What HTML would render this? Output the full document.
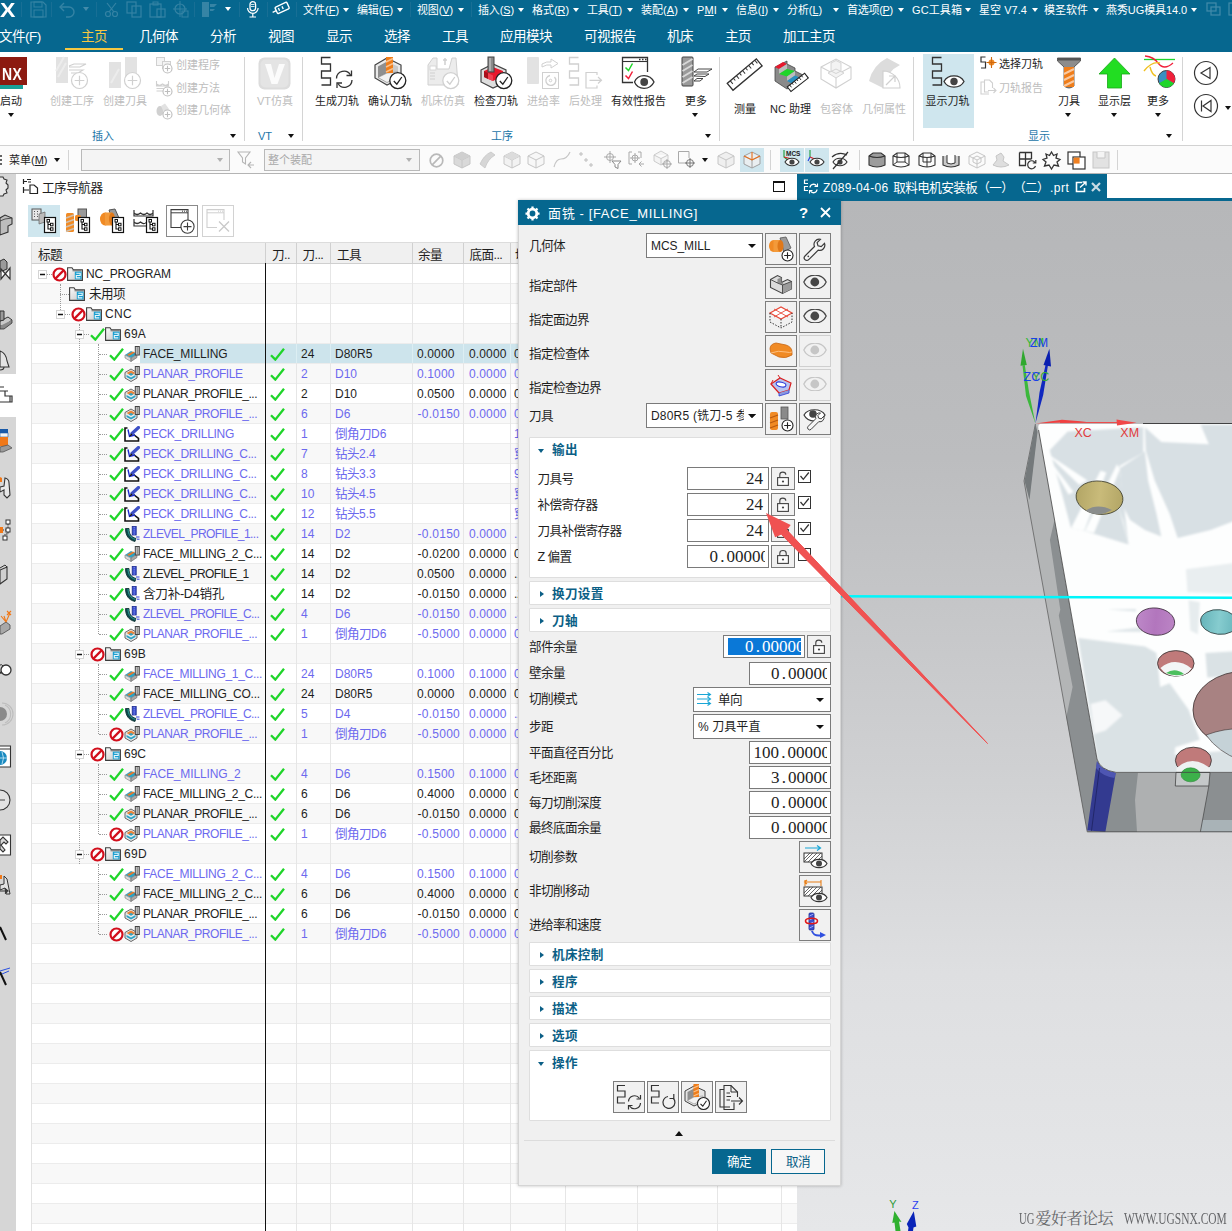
<!DOCTYPE html>
<html lang="zh-CN"><head><meta charset="utf-8"><title>NX - 面铣 [FACE_MILLING]</title>
<style>
*{box-sizing:border-box;margin:0;padding:0}
html,body{width:1232px;height:1231px;overflow:hidden;background:#fff}
body{font-family:"Liberation Sans","Noto Sans CJK SC",sans-serif;font-size:12px;color:#1e1e1e;position:relative}
#root{position:absolute;left:0;top:0;width:1232px;height:1231px;overflow:hidden}
.a{position:absolute;white-space:nowrap;display:block}
.t{position:absolute;white-space:nowrap;line-height:16px;height:16px}
svg{overflow:visible}
.topbar{left:0;top:0;width:1232px;height:52px;background:#06678f}
.qm{color:#fff;font-size:11px}
.tab{color:#fff;font-size:13.5px;letter-spacing:-.5px;line-height:18px;height:18px}
.rib{left:0;top:52px;width:1232px;height:94px;background:#fff;border-bottom:1px solid #d2d2d2}
.rl{font-size:11px;color:#1e1e1e}
.dis{color:#bdbdbd}
.grp{font-size:11px;color:#1b75a8}
.vsep{position:absolute;width:1px;background:#d4d4d4}
.tb{left:0;top:146px;width:1232px;height:28px;background:#fbfbfb;border-bottom:1px solid #b4b4b4}
.caret{position:absolute;width:0;height:0;border-left:3.5px solid transparent;border-right:3.5px solid transparent;border-top:4px solid #111}
.caretw{border-top-color:#fff}
.pu{color:#6c69ee}
.tr{font-size:12px}
.dl{font-size:12.6px;letter-spacing:-.6px;color:#1e1e1e}
.cj{font-size:12.6px;letter-spacing:-.6px}
.sec{font-size:12px;font-weight:bold;color:#0b5f86}
.num{font-family:"Liberation Serif","Noto Serif CJK SC",serif;font-size:17px;color:#222}
</style></head>
<body><div id="root">
<svg width="0" height="0" style="position:absolute"><defs>
<symbol id="ck" viewBox="0 0 15 13"><path d="M1 7.2 L5.3 11.6 L14 0.8" fill="none" stroke="#1fd52a" stroke-width="2.3"/></symbol>
<symbol id="no" viewBox="0 0 15 15"><circle cx="7.5" cy="7.5" r="6" fill="#fff" stroke="#d20f1c" stroke-width="2.2"/><path d="M3.4 11.6 L11.6 3.4" stroke="#d20f1c" stroke-width="2.2"/></symbol>
<symbol id="fd" viewBox="0 0 16 14"><defs><linearGradient id="fdg" x1="0" y1="0" x2="1" y2="1"><stop offset="0" stop-color="#fbfbfb"/><stop offset="1" stop-color="#c4c4c4"/></linearGradient></defs><path d="M0.600 13.400 V0.800 H5 L6.300 2.800 H15.400 V13.400 Z" fill="url(#fdg)" stroke="#3c3c3c" stroke-width="1.100"/><path d="M5.500 3.800 H14.500" stroke="#555" stroke-width=".800"/><rect x="7.800" y="4.600" width="6.800" height="7.800" fill="#1a9fd0"/><path d="M9.300 6.200 H13.200 V8.500 H9.300 V10.900 H13.300" fill="none" stroke="#e8f6fb" stroke-width="1.100"/></symbol>
<symbol id="ex" viewBox="0 0 9 9"><rect x=".500" y=".500" width="8" height="8" fill="#fff" stroke="#d4d4d4"/><path d="M2 4.500 H7" stroke="#111" stroke-width="1.500"/></symbol>
<symbol id="opf" viewBox="0 0 16 16"><path d="M1 9 L7 5 L13 8 L7 12 Z" fill="#2aa4c8"/><path d="M3 8.5 L9 5.5 L11 6.5 L5 10 Z" fill="#e07a30"/><path d="M1 9 V12 L7 15.5 V12 Z" fill="#d8d8d8" stroke="#777" stroke-width=".6"/><path d="M7 12 L13 8 V11.5 L7 15.5 Z" fill="#a9a9a9" stroke="#666" stroke-width=".6"/><rect x="11.3" y="0.5" width="4" height="8.5" fill="#c9c9c9" stroke="#444" stroke-width="1"/><path d="M13.3 1 V8.5" stroke="#777" stroke-width=".8"/></symbol>
<symbol id="opp" viewBox="0 0 16 16"><path d="M1 6.5 L7 3 L13 6.5 V12 L7 15.5 L1 12 Z" fill="#e8e8e8" stroke="#666" stroke-width="1"/><path d="M2.5 7 L7 4.5 L11.5 7 L7 9.5 Z" fill="#e8843a"/><path d="M2.5 9 L7 11.5 L11.5 9 V11 L7 13.5 L2.5 11 Z" fill="#2aa4c8"/><path d="M4.5 8.3 L7 7 L9.5 8.3 L7 9.8 Z" fill="#2aa4c8"/><rect x="11.3" y="0.5" width="4" height="8" fill="#c9c9c9" stroke="#444" stroke-width="1"/><path d="M13.3 1 V8" stroke="#777" stroke-width=".8"/></symbol>
<symbol id="opd" viewBox="0 0 16 16"><path d="M3.5 2 H1 V15 H14.5 V12.5 L9.5 8.5" fill="none" stroke="#111" stroke-width="1.6"/><path d="M4 3.5 L5.5 10.5 L11 9" fill="none" stroke="#1b2bd0" stroke-width="1.4"/><path d="M8 7.5 L14.5 1.5" stroke="#3f51c5" stroke-width="3.2" stroke-linecap="round"/><path d="M5.2 10.8 L8.6 8.9 L7 7.2 Z" fill="#111"/></symbol>
<symbol id="opz" viewBox="0 0 16 16"><path d="M1.5 2.5 H5 C5 8 7 11 12 12.5 L11 15.5 C4.5 14 1.5 9.5 1.5 2.5 Z" fill="#0e4a4d" stroke="#082a2c" stroke-width=".8"/><path d="M4 3 C4.2 8.5 6.5 11.8 11.3 13.4" fill="none" stroke="#2b9a9a" stroke-width="1"/><rect x="8.2" y="0.5" width="4" height="8.5" fill="#3b4fd0" stroke="#1c2a90" stroke-width=".8"/><path d="M10.2 1 V9" stroke="#9aa6f0" stroke-width=".8" stroke-dasharray="1.2 1"/><path d="M12 11 H15.5 M13 13.2 H15.5" stroke="#2438d8" stroke-width="1"/></symbol>
<symbol id="eye" viewBox="0 0 24 14"><path d="M.800 7 C5 -2.200 19 -2.200 23.200 7 C19 16.200 5 16.200 .800 7 Z" fill="none" stroke="currentColor" stroke-width="1.200"/><circle cx="11.800" cy="7" r="4.400" fill="currentColor"/></symbol>
<symbol id="lk" viewBox="0 0 12 15"><rect x=".6" y="6.6" width="10.8" height="7.8" fill="#fdfdfd" stroke="#444" stroke-width="1.1"/><path d="M2.8 6.5 V3.8 C2.8 .2 8.8 .2 8.8 3.8" fill="none" stroke="#444" stroke-width="1.1"/><circle cx="6" cy="10.5" r="1.1" fill="#444"/></symbol>
<symbol id="lkc" viewBox="0 0 12 15"><rect x=".6" y="6.6" width="10.8" height="7.8" fill="#fdfdfd" stroke="#444" stroke-width="1.1"/><path d="M2.8 6.5 V4.2 C2.8 .6 9.2 .6 9.2 4.2 V6.5" fill="none" stroke="#444" stroke-width="1.1"/><circle cx="6" cy="10.5" r="1.1" fill="#444"/></symbol>
</defs></svg>
<div class="a topbar"></div>
<span class="a" style="left:0px;top:-2.500px;font-size:21px;line-height:24px;font-weight:bold;color:#fff;transform:scaleX(1.1);transform-origin:0 0">X</span>
<span class="t qm" style="left:303px;top:1.5px;font-size:11px;">文件(<u>F</u>)</span><i class="caret caretw" style="left:342.5px;top:8px;"></i><span class="t qm" style="left:357px;top:1.5px;font-size:11px;letter-spacing:-0.14px;">编辑(<u>E</u>)</span><i class="caret caretw" style="left:396.5px;top:8px;"></i><span class="t qm" style="left:417px;top:1.5px;font-size:11px;letter-spacing:-0.14px;">视图(<u>V</u>)</span><i class="caret caretw" style="left:457.5px;top:8px;"></i><span class="t qm" style="left:478px;top:1.5px;font-size:11px;letter-spacing:-0.14px;">插入(<u>S</u>)</span><i class="caret caretw" style="left:517.5px;top:8px;"></i><span class="t qm" style="left:532px;top:1.5px;font-size:11px;letter-spacing:-0.06px;">格式(<u>R</u>)</span><i class="caret caretw" style="left:572.5px;top:8px;"></i><span class="t qm" style="left:587px;top:1.5px;font-size:11px;letter-spacing:-0.22px;">工具(<u>T</u>)</span><i class="caret caretw" style="left:626.5px;top:8px;"></i><span class="t qm" style="left:641px;top:1.5px;font-size:11px;letter-spacing:0.06px;">装配(<u>A</u>)</span><i class="caret caretw" style="left:682.5px;top:8px;"></i><span class="t qm" style="left:697px;top:1.5px;font-size:11px;letter-spacing:0.14px;">P<u>M</u>I</span><i class="caret caretw" style="left:721.5px;top:8px;"></i><span class="t qm" style="left:736px;top:1.5px;font-size:11px;letter-spacing:-0.08px;">信息(<u>I</u>)</span><i class="caret caretw" style="left:772.5px;top:8px;"></i><span class="t qm" style="left:787px;top:1.5px;font-size:11px;letter-spacing:-0.09px;">分析(<u>L</u>)</span><i class="caret caretw" style="left:832.5px;top:8px;"></i><span class="t qm" style="left:847px;top:1.5px;font-size:11px;letter-spacing:-0.28px;">首选项(<u>P</u>)</span><i class="caret caretw" style="left:897.5px;top:8px;"></i><span class="t qm" style="left:912px;top:1.5px;font-size:11px;letter-spacing:0.10px;">GC工具箱</span><i class="caret caretw" style="left:964.5px;top:8px;"></i><span class="t qm" style="left:979px;top:1.5px;font-size:11px;letter-spacing:0.04px;">星空 V7.4</span><i class="caret caretw" style="left:1031.5px;top:8px;"></i><span class="t qm" style="left:1044px;top:1.5px;font-size:11px;">模圣软件</span><i class="caret caretw" style="left:1092.5px;top:8px;"></i><span class="t qm" style="left:1106px;top:1.5px;font-size:11px;letter-spacing:-0.09px;">燕秀UG模具14.0</span><i class="caret caretw" style="left:1190.5px;top:8px;"></i>
<i class="vsep" style="left:21px;top:2px;height:15px;background:#186f95"></i><i class="vsep" style="left:51px;top:2px;height:15px;background:#186f95"></i><i class="vsep" style="left:96px;top:2px;height:15px;background:#186f95"></i><i class="vsep" style="left:194px;top:2px;height:15px;background:#186f95"></i><i class="vsep" style="left:239px;top:2px;height:15px;background:#186f95"></i><i class="vsep" style="left:267px;top:2px;height:15px;background:#186f95"></i><i class="vsep" style="left:296px;top:2px;height:15px;background:#186f95"></i><i class="vsep" style="left:410px;top:2px;height:15px;background:#186f95"></i><i class="vsep" style="left:471px;top:2px;height:15px;background:#186f95"></i>
<span class="t tab" style="left:-1px;top:28px;">文件(F)</span><span class="t tab" style="left:81px;top:28px;color:#f5c842;">主页</span><span class="t tab" style="left:139px;top:28px;">几何体</span><span class="t tab" style="left:210px;top:28px;">分析</span><span class="t tab" style="left:268px;top:28px;">视图</span><span class="t tab" style="left:326px;top:28px;">显示</span><span class="t tab" style="left:384px;top:28px;">选择</span><span class="t tab" style="left:442px;top:28px;">工具</span><span class="t tab" style="left:500px;top:28px;">应用模块</span><span class="t tab" style="left:584px;top:28px;">可视报告</span><span class="t tab" style="left:667px;top:28px;">机床</span><span class="t tab" style="left:725px;top:28px;">主页</span><span class="t tab" style="left:783px;top:28px;">加工主页</span><i class="a" style="left:65px;top:48px;width:58px;height:2px;background:#f5c842"></i>
<div class="a rib"></div>
<i class="vsep" style="left:244px;top:57px;height:84px"></i><i class="vsep" style="left:302px;top:57px;height:84px"></i><i class="vsep" style="left:719px;top:57px;height:84px"></i><i class="vsep" style="left:913px;top:57px;height:84px"></i><i class="vsep" style="left:1182px;top:57px;height:84px"></i>
<i class="a" style="left:923px;top:54px;width:51px;height:74px;background:#cfe6ee"></i>
<span class="t rl" style="left:0px;top:93px;">启动</span><span class="t rl dis" style="left:50px;top:93px;">创建工序</span><span class="t rl dis" style="left:103px;top:93px;">创建刀具</span><span class="t rl dis" style="left:176px;top:57px;">创建程序</span><span class="t rl dis" style="left:176px;top:80px;">创建方法</span><span class="t rl dis" style="left:176px;top:102px;">创建几何体</span><span class="t rl dis" style="left:257px;top:93px;">VT仿真</span><span class="t rl" style="left:315px;top:93px;">生成刀轨</span><span class="t rl" style="left:368px;top:93px;">确认刀轨</span><span class="t rl dis" style="left:421px;top:93px;">机床仿真</span><span class="t rl" style="left:474px;top:93px;">检查刀轨</span><span class="t rl dis" style="left:527px;top:93px;">进给率</span><span class="t rl dis" style="left:569px;top:93px;">后处理</span><span class="t rl" style="left:611px;top:93px;">有效性报告</span><span class="t rl" style="left:685px;top:93px;">更多</span><span class="t rl" style="left:734px;top:101px;">测量</span><span class="t rl" style="left:770px;top:101px;">NC 助理</span><span class="t rl dis" style="left:820px;top:101px;">包容体</span><span class="t rl dis" style="left:862px;top:101px;">几何属性</span><span class="t rl" style="left:925.5px;top:93px;">显示刀轨</span><span class="t rl" style="left:999px;top:56px;">选择刀轨</span><span class="t rl dis" style="left:999px;top:80px;">刀轨报告</span><span class="t rl" style="left:1058px;top:93px;">刀具</span><span class="t rl" style="left:1098px;top:93px;">显示层</span><span class="t rl" style="left:1147px;top:93px;">更多</span>
<span class="t grp" style="left:92px;top:128px;">插入</span><span class="t grp" style="left:258px;top:128px;">VT</span><span class="t grp" style="left:491px;top:128px;">工序</span><span class="t grp" style="left:1028px;top:128px;">显示</span><i class="caret" style="left:8px;top:113px;"></i><i class="caret" style="left:230px;top:134px;"></i><i class="caret" style="left:288px;top:134px;"></i><i class="caret" style="left:705px;top:134px;"></i><i class="caret" style="left:692px;top:113px;"></i><i class="caret" style="left:1065px;top:113px;"></i><i class="caret" style="left:1111px;top:113px;"></i><i class="caret" style="left:1155px;top:113px;"></i><i class="caret" style="left:1166px;top:134px;"></i><i class="caret" style="left:1225px;top:106px;"></i>
<div class="a tb"></div>
<span class="t rl" style="left:9px;top:152px;">菜单(<u>M</u>)</span><i class="caret" style="left:54px;top:158px;"></i><i class="vsep" style="left:68px;top:150px;height:20px"></i><i class="a" style="left:81px;top:149px;width:149px;height:22px;background:#f4f4f4;border:1px solid #b9b9b9"></i><i class="caret" style="left:217px;top:158px;border-top-color:#b0b0b0"></i><i class="a" style="left:264px;top:149px;width:156px;height:22px;background:#f4f4f4;border:1px solid #b9b9b9"></i><span class="t rl" style="left:268px;top:152px;color:#a8a8a8">整个装配</span><i class="caret" style="left:406px;top:158px;border-top-color:#b0b0b0"></i>
<i class="a" style="left:0px;top:57px;width:27px;height:28px;background:#8c1a10"></i><i class="a" style="left:0px;top:85px;width:23px;height:4px;background:#1aa098"></i><span class="a" style="left:1.500px;top:64.500px;font-size:17px;line-height:20px;font-weight:bold;color:#fff;transform:scaleX(.82);transform-origin:0 0;letter-spacing:.500px">NX</span><svg class="a" style="left:56px;top:57px" width="33" height="33" viewBox="0 0 33 33"><rect x="0" y="0" width="12" height="26" fill="#e2e2e2"/><path d="M2 20 L10 6 M0 14 L8 0" stroke="#ececec" stroke-width="2"/><path d="M13 9 L18 7 H30 L24 10 H13 M13 13 H27 L22 16 H15" fill="none" stroke="#d0d0d0" stroke-width="1.100"/><circle cx="23.5" cy="23.5" r="8" fill="#fff" stroke="#d0d0d0" stroke-width="1.2"/><path d="M18.7 23.5 H28.3 M23.5 18.7 V28.3" stroke="#d0d0d0" stroke-width="1.2"/></svg><svg class="a" style="left:109px;top:57px" width="33" height="33" viewBox="0 0 33 33"><rect x="16" y="0" width="12" height="21" fill="#e2e2e2"/><rect x="0" y="5" width="12" height="26" fill="#e2e2e2"/><path d="M2 26 L10 12" stroke="#ececec" stroke-width="2"/><circle cx="23.5" cy="23.5" r="8" fill="#fff" stroke="#d0d0d0" stroke-width="1.2"/><path d="M18.7 23.5 H28.3 M23.5 18.7 V28.3" stroke="#d0d0d0" stroke-width="1.2"/></svg><svg class="a" style="left:156px;top:57px" width="17" height="17" viewBox="0 0 17 17"><rect x=".500" y=".500" width="8" height="8" fill="#f4f4f4" stroke="#d0d0d0"/><rect x="6.500" y="4.500" width="8" height="7" fill="#f4f4f4" stroke="#d0d0d0"/><circle cx="11.5" cy="11.5" r="4.5" fill="#fff" stroke="#bdbdbd" stroke-width="1.1"/><path d="M8.8 11.5 H14.2 M11.5 8.8 V14.2" stroke="#bdbdbd" stroke-width="1.1"/></svg><svg class="a" style="left:156px;top:80px" width="17" height="17" viewBox="0 0 17 17"><path d="M.500 1 V6 H12.500 V1 M.500 4 Q3.500 6.500 6.500 4 Q9.500 6.500 12.500 4 M.500 8.500 H12.500 M.500 11 H7" fill="none" stroke="#d0d0d0" stroke-width="1.100"/><circle cx="11.5" cy="11.5" r="4.5" fill="#fff" stroke="#bdbdbd" stroke-width="1.1"/><path d="M8.8 11.5 H14.2 M11.5 8.8 V14.2" stroke="#bdbdbd" stroke-width="1.1"/></svg><svg class="a" style="left:156px;top:103px" width="17" height="17" viewBox="0 0 17 17"><ellipse cx="4" cy="8" rx="3.500" ry="5" fill="#d0d0d0"/><path d="M5 3 L9 .500 L13 6 L9 12 Z" fill="#e2e2e2"/><circle cx="11.5" cy="11.5" r="4.5" fill="#fff" stroke="#bdbdbd" stroke-width="1.1"/><path d="M8.8 11.5 H14.2 M11.5 8.8 V14.2" stroke="#bdbdbd" stroke-width="1.1"/></svg><svg class="a" style="left:258px;top:57px" width="33" height="33" viewBox="0 0 33 33"><rect x=".500" y=".500" width="32" height="32" rx="6" fill="#dcdcdc"/><rect x="2.500" y="2.500" width="28" height="28" rx="5" fill="#e4e4e4"/><path d="M7 7 H13 L16.500 21 L21 7 H27 L19.500 27 H13.500 Z" fill="#fbfbfb"/></svg><svg class="a" style="left:321px;top:57px" width="34" height="34" viewBox="0 0 34 34"><path d="M9.500 .500 H.500 V7 H9.500 V14 H.500 V21 H9.500 V28 H.500" fill="none" stroke="#333" stroke-width="1.300"/><path d="M15.500 21.500 A7.500 7.500 0 0 1 29.500 18 M31 23 A7.500 7.500 0 0 1 17 26.500" fill="none" stroke="#333" stroke-width="1.300"/><path d="M30.500 13.500 V18.500 H25.500 M16 31 V26 H21" fill="none" stroke="#333" stroke-width="1.300"/></svg><svg class="a" style="left:374px;top:57px" width="34" height="34" viewBox="0 0 34 34"><path d="M1 8 L13 1 L27 8 V21 L13 28 L1 21 Z" fill="#e9e9e9" stroke="#444" stroke-width="1.200"/><path d="M4 9.500 L13 4.500 V16 L4 20.500 Z" fill="#8f8f8f"/><path d="M13 4.500 L24 9.500 V15 L13 16 Z" fill="#c9c9c9"/><path d="M4 20.500 L13 16 L24 15 L24 20 L13 25.500 Z" fill="#f2f2f2" stroke="#777" stroke-width=".600"/><rect x="12" y="0" width="7" height="16" fill="#ef7d1a"/><path d="M12 5 L19 1.500 M12 10 L19 6.500 M12 15 L19 11.500" stroke="#f9c08a" stroke-width="1.600"/><circle cx="23.8" cy="23.6" r="8" fill="#fff" stroke="#222" stroke-width="1.3"/><path d="M19.8 24 L22.84 27.2 L27.8 20" fill="none" stroke="#222" stroke-width="1.3"/></svg><svg class="a" style="left:427px;top:57px" width="34" height="34" viewBox="0 0 34 34"><path d="M1 28 V8 L6 1 H10 V12 H22 L25 1 H29 L31 28 Z" fill="#ececec" stroke="#d0d0d0" stroke-width="1"/><rect x="3" y="9" width="6" height="4" fill="#fff" stroke="#d0d0d0" stroke-width=".800"/><path d="M3 16 H8 M3 19 H8 M3 22 H8" stroke="#d0d0d0"/><path d="M18 1 V8 M16 3 H20" stroke="#d0d0d0" stroke-width="1.500"/><circle cx="23.8" cy="23.6" r="8" fill="#fff" stroke="#d0d0d0" stroke-width="1.3"/><path d="M19.8 24 L22.84 27.2 L27.8 20" fill="none" stroke="#d0d0d0" stroke-width="1.3"/></svg><svg class="a" style="left:480px;top:57px" width="34" height="34" viewBox="0 0 34 34"><path d="M1 13 L13 7 L26 13 V25 L13 31 L1 25 Z" fill="#dedede" stroke="#444" stroke-width="1.200"/><path d="M4 14 L13 10 L23 14 L23 19 L13 24 L4 20 Z" fill="#e8182c"/><path d="M4 14 L8 16 V22 L4 20 Z" fill="#a8101c"/><path d="M8 16 L13 18.500 V24 L8 22 Z" fill="#f04050"/><rect x="8" y="0" width="6" height="15" fill="#8a8a8a" stroke="#444" stroke-width="1"/><path d="M10 1 V14" stroke="#bdbdbd" stroke-width="1.500"/><circle cx="23.8" cy="23.6" r="8" fill="#fff" stroke="#222" stroke-width="1.3"/><path d="M19.8 24 L22.84 27.2 L27.8 20" fill="none" stroke="#222" stroke-width="1.3"/></svg><svg class="a" style="left:527px;top:57px" width="34" height="34" viewBox="0 0 34 34"><rect x="0" y="0" width="12" height="27" rx="1" fill="#e2e2e2"/><path d="M15 7 Q20 4 24 5 V2 L31 6.500 L24 11 V8 Q20 7 15 10 Z" fill="#fff" stroke="#d0d0d0" stroke-width="1"/><rect x="15.500" y="15.500" width="16" height="16" fill="#fff" stroke="#d0d0d0" stroke-width="1"/><path d="M27.500 20 A5 5 0 1 1 23 18.500" fill="none" stroke="#d0d0d0" stroke-width="1.300"/><circle cx="23.500" cy="23.500" r="1.300" fill="none" stroke="#d0d0d0"/></svg><svg class="a" style="left:569px;top:57px" width="34" height="34" viewBox="0 0 34 34"><path d="M9.500 .500 H.500 V7 H9.500 V14 H.500 V21 H9.500 V28 H.500" fill="none" stroke="#d0d0d0" stroke-width="1.300"/><path d="M28 18 V15.500 H17 V31 H28 V28.500" fill="none" stroke="#d0d0d0" stroke-width="1.200"/><path d="M20.500 23.300 H32 M29 20 L32.500 23.300 L29 26.500" fill="none" stroke="#d0d0d0" stroke-width="1.200"/></svg><svg class="a" style="left:622px;top:57px" width="34" height="34" viewBox="0 0 34 34"><path d="M11 25.500 H.500 V.500 H25.500 V15" fill="none" stroke="#333" stroke-width="1.300"/><path d="M.500 4.500 H25.500" stroke="#333" stroke-width="1.100"/><path d="M17 2.500 h1.500 M20 2.500 h1.500 M23 2.500 h1.500" stroke="#333" stroke-width="1.300"/><path d="M3.500 10.500 L6.500 13.500 L10.500 6.500" fill="none" stroke="#1fd52a" stroke-width="1.500"/><path d="M3.500 18.500 L6.500 21.500 L10.500 14.500" fill="none" stroke="#f0203a" stroke-width="1.500"/><path d="M12.500 25 C16 16.500 28 16.500 32 25 C28 33.500 16 33.500 12.500 25 Z" fill="#fff" stroke="#333" stroke-width="1.300"/><circle cx="22.200" cy="25" r="3.900" fill="#444"/></svg><svg class="a" style="left:681px;top:57px" width="34" height="34" viewBox="0 0 34 34"><rect x="1" y="0" width="11" height="29" rx="1" fill="#9a9a9a" stroke="#444" stroke-width="1"/><path d="M1.500 8 L11.500 2 M1.500 14 L11.500 8 M1.500 20 L11.500 14 M1.500 26 L11.500 20" stroke="#d8d8d8" stroke-width="2"/><path d="M13 15 L17 12 H31 L26 15 Z M13 19 L16 17 H28 L24 19.500 Z M13 24 L16 21.500 H22 L19 24 Z" fill="#fff" stroke="#333" stroke-width=".900"/></svg><svg class="a" style="left:728px;top:57px" width="36" height="36" viewBox="0 0 36 36"><g transform="rotate(-40 17 18)"><rect x="-2" y="13" width="38" height="9" fill="#fff" stroke="#333" stroke-width="1.300"/><path d="M2 13 v4 M6 13 v3 M10 13 v4 M14 13 v3 M18 13 v4 M22 13 v3 M26 13 v4 M30 13 v3 M34 13 v4" stroke="#333" stroke-width="1"/></g></svg><svg class="a" style="left:773px;top:57px" width="36" height="36" viewBox="0 0 36 36"><path d="M2 10 L2 24 L14 32 L30 22 V18 L22 14 V11 L14 7 V4 Z" fill="#8a8a8a" stroke="#444" stroke-width=".800"/><path d="M2 10 L10 5 L14 7 L6 12 Z" fill="#e8182c"/><path d="M6 12 V17 L14 12 V7 Z" fill="#bdbdbd"/><path d="M6 17 L14 12 L22 14 L14 19.500 Z" fill="#1fd52a"/><path d="M14 19.500 V24 L22 18.500 V14 Z" fill="#bdbdbd"/><path d="M14 24 L22 18.500 L30 22 L22 28 Z" fill="#2a8fc0"/><g transform="rotate(-38 24 26)"><rect x="14" y="23" width="22" height="6" fill="#fff" stroke="#222" stroke-width="1.100"/><path d="M17 23 v3 M20 23 v2 M23 23 v3 M26 23 v2 M29 23 v3 M32 23 v2" stroke="#222" stroke-width=".900"/></g></svg><svg class="a" style="left:820px;top:57px" width="34" height="34" viewBox="0 0 34 34"><path d="M1 10 L16 2 L31 10 V22 L16 31 L1 22 Z M1 10 L16 18 L31 10 M16 18 V31" fill="none" stroke="#d0d0d0" stroke-width="1.100"/><path d="M11 6 L16 3.500 L21 6 V14 L16 16.500 L11 14 Z M8 16 L16 12 L24 16 L16 21 Z" fill="#f3f3f3" stroke="#d0d0d0" stroke-width=".900"/></svg><svg class="a" style="left:867px;top:57px" width="36" height="36" viewBox="0 0 36 36"><path d="M2 24 Q6 8 20 1 L33 8 Q20 14 16 31 Z" fill="#dcdcdc"/><path d="M16 31 H33 A17 17 0 0 0 16 14 Z" fill="#fff" stroke="#d0d0d0" stroke-width="1.100"/><path d="M19 28 L28 19 M22 19 H28 V25" fill="none" stroke="#d0d0d0" stroke-width="1.200"/></svg><svg class="a" style="left:932px;top:57px" width="34" height="34" viewBox="0 0 34 34"><path d="M9.500 .500 H.500 V7 H9.500 V14 H.500 V21 H9.500 V28 H.500" fill="none" stroke="#333" stroke-width="1.300"/><path d="M12 24.500 C16 17 28 17 32 24.500 C28 32 16 32 12 24.500 Z" fill="#fff" stroke="#333" stroke-width="1.300"/><circle cx="22" cy="24.500" r="3.700" fill="#444"/></svg><svg class="a" style="left:980px;top:56px" width="18" height="18" viewBox="0 0 18 18"><path d="M5.500 1 H1 V6 H5.500 V12 H1" fill="none" stroke="#333" stroke-width="1.200"/><circle cx="11.500" cy="6.500" r="3" fill="#f08a24"/><path d="M11.500 1 V12 M6.500 6.500 H16.500" stroke="#d06a10" stroke-width="1.100"/></svg><svg class="a" style="left:980px;top:79px" width="18" height="18" viewBox="0 0 18 18"><path d="M5 3 H1 V15 H9 M9 13 H4.500 V1 H9.500 L12.500 4 V9" fill="none" stroke="#d0d0d0" stroke-width="1.100"/><path d="M8 11.500 H16 M13.500 9 L16 11.500 L13.500 14" fill="none" stroke="#d0d0d0" stroke-width="1.100"/></svg><svg class="a" style="left:1057px;top:57px" width="26" height="34" viewBox="0 0 26 34"><path d="M.500 1 H23.500 V4 L17 10 V29 Q12 33 7 29 V10 L.500 4 Z" fill="#8c8c8c" stroke="#444" stroke-width=".800"/><rect x="7" y="10" width="10" height="20" fill="#ef7d1a"/><path d="M7 17 L17 12 M7 23 L17 18 M7 29 L17 24" stroke="#f9c9a0" stroke-width="2"/><rect x="1" y="1" width="22" height="2.500" fill="#555"/></svg><svg class="a" style="left:1098px;top:57px" width="34" height="34" viewBox="0 0 34 34"><path d="M16.500 1 L32 17 H23.500 V31 H9.500 V17 H1 Z" fill="#22dd22" stroke="#17a817" stroke-width=".800"/></svg><svg class="a" style="left:1142px;top:55px" width="36" height="36" viewBox="0 0 36 36"><path d="M2 4.500 H33" stroke="#1fd52a" stroke-width="1.300"/><path d="M3 1 Q12 2 16 8 Q22 16 31 8" fill="none" stroke="#f0203a" stroke-width="1.300"/><path d="M2 16 Q10 6 18 8 M8 12 Q10 20 14 21" fill="none" stroke="#f0c020" stroke-width="1.400"/><circle cx="24.500" cy="24" r="8.500" fill="#3a8fc0" stroke="#333" stroke-width=".900"/><path d="M24.500 24 V15.500 A8.500 8.500 0 0 1 31.800 28.300 Z" fill="#f0203a"/><path d="M24.500 24 L31.800 28.300 A8.500 8.500 0 0 1 17.200 28.300 Z" fill="#1fd52a"/></svg><svg class="a" style="left:1193px;top:60px" width="28" height="28" viewBox="0 0 28 28"><circle cx="13" cy="13" r="11.500" fill="#fff" stroke="#333" stroke-width="1.200"/><path d="M17 7.500 V18.500 L8 13 Z" fill="none" stroke="#333" stroke-width="1.200"/></svg><svg class="a" style="left:1193px;top:93px" width="28" height="28" viewBox="0 0 28 28"><circle cx="13" cy="13" r="11.500" fill="#fff" stroke="#333" stroke-width="1.200"/><path d="M18 7.500 V18.500 L10 13 Z M8.500 7.500 V18.500" fill="none" stroke="#333" stroke-width="1.200"/></svg>
<svg opacity=".38" class="a" style="left:30px;top:1px" width="17" height="17" viewBox="0 0 17 17"><path d="M1 1 H13 L16 4 V16 H1 Z" fill="none" stroke="#7fb0c6" stroke-width="1.200"/><rect x="4" y="1" width="8" height="5" fill="none" stroke="#7fb0c6"/><rect x="4" y="9" width="9" height="7" fill="none" stroke="#7fb0c6"/></svg><svg opacity=".38" class="a" style="left:58px;top:1px" width="18" height="17" viewBox="0 0 18 17"><path d="M2 6 H11 A5 5 0 0 1 11 16 H8" fill="none" stroke="#7fb0c6" stroke-width="1.400"/><path d="M6 2 L2 6 L6 10" fill="none" stroke="#7fb0c6" stroke-width="1.400"/></svg><i class="caret" style="left:83px;top:7px;border-top-color:#7fb0c6;opacity:.5"></i><svg opacity=".38" class="a" style="left:104px;top:1px" width="16" height="17" viewBox="0 0 16 17"><circle cx="4" cy="13" r="2.500" fill="none" stroke="#7fb0c6" stroke-width="1.200"/><circle cx="11" cy="13" r="2.500" fill="none" stroke="#7fb0c6" stroke-width="1.200"/><path d="M5 11 L12 2 M10 11 L3 2" stroke="#7fb0c6" stroke-width="1.200"/></svg><svg opacity=".38" class="a" style="left:126px;top:1px" width="16" height="17" viewBox="0 0 16 17"><rect x="1" y="1" width="9" height="11" fill="none" stroke="#7fb0c6" stroke-width="1.200"/><rect x="6" y="5" width="9" height="11" fill="none" stroke="#7fb0c6" stroke-width="1.200"/></svg><svg opacity=".38" class="a" style="left:149px;top:1px" width="17" height="17" viewBox="0 0 17 17"><rect x="1" y="3" width="11" height="13" fill="none" stroke="#7fb0c6" stroke-width="1.200"/><rect x="4" y="1" width="5" height="3" fill="none" stroke="#7fb0c6"/><rect x="8" y="8" width="8" height="8" fill="none" stroke="#7fb0c6" stroke-width="1.200"/></svg><svg opacity=".38" class="a" style="left:173px;top:1px" width="17" height="17" viewBox="0 0 17 17"><circle cx="7" cy="8" r="5" fill="none" stroke="#7fb0c6" stroke-width="1.200"/><path d="M7 0 V16 M0 8 H14" stroke="#7fb0c6" stroke-width="1"/><rect x="9" y="10" width="6" height="6" fill="none" stroke="#7fb0c6"/></svg><svg opacity=".4" class="a" style="left:201px;top:1px" width="18" height="17" viewBox="0 0 18 17"><rect x="1" y="1" width="7" height="15" fill="#7fb0c6"/><path d="M9 3 H16 L13 6 H9 Z M9 8 H14 L12 10 H9 Z" fill="#7fb0c6"/></svg><i class="caret caretw" style="left:224.5px;top:7px;"></i><svg class="a" style="left:246px;top:1px" width="14" height="17" viewBox="0 0 14 17"><rect x="4" y=".700" width="5.600" height="9" rx="2.800" fill="none" stroke="#fff" stroke-width="1.300"/><path d="M1.500 7 A5.300 5.300 0 0 0 12.100 7 M6.800 12.500 V15.500 M3.500 16 H10" fill="none" stroke="#fff" stroke-width="1.200"/><path d="M5 3.500 h3.500 M5 5.500 h3.500" stroke="#fff" stroke-width=".800"/></svg><svg class="a" style="left:271px;top:1px" width="20" height="17" viewBox="0 0 20 17"><g transform="rotate(-25 10 8)"><rect x="5" y="4" width="13" height="7" rx="1" fill="none" stroke="#fff" stroke-width="1.400"/><path d="M5 7.500 H1 M8 6 v3 M12 6 v3" stroke="#fff" stroke-width="1.400"/></g></svg><svg opacity=".5" class="a" style="left:1206px;top:2px" width="16" height="15" viewBox="0 0 16 15"><rect x="1" y="1" width="9" height="8" fill="none" stroke="#7fb0c6" stroke-width="1.200"/><rect x="5" y="5" width="9" height="8" fill="none" stroke="#7fb0c6" stroke-width="1.200"/></svg><svg opacity=".5" class="a" style="left:1228px;top:2px" width="12" height="15" viewBox="0 0 12 15"><rect x="1" y="1" width="12" height="12" fill="none" stroke="#7fb0c6" stroke-width="1.200"/></svg>
<svg class="a" style="left:-3px;top:154px" width="6" height="12" viewBox="0 0 6 12"><path d="M0 2 H5 M0 6 H5 M0 10 H5" stroke="#333" stroke-width="1.300"/></svg><svg class="a" style="left:236px;top:150px" width="20" height="20" viewBox="0 0 20 20"><path d="M2 2 H14 L9.500 8 V14 L6.500 12 V8 Z" fill="none" stroke="#b5b5b5" stroke-width="1.100"/><path d="M12 15 H18 M15 12 L12 15 L15 18" fill="none" stroke="#b5b5b5" stroke-width="1.100"/></svg><svg class="a" style="left:429px;top:153px" width="15" height="15" viewBox="0 0 15 15"><circle cx="7.500" cy="7.500" r="6.300" fill="none" stroke="#b9b9b9" stroke-width="1.700"/><path d="M3.200 11.800 L11.800 3.200" stroke="#b9b9b9" stroke-width="1.700"/></svg><svg class="a" style="left:453px;top:151px" width="18" height="18" viewBox="0 0 18 18"><path d="M1 5 L9 1 L17 5 V13 L9 17 L1 13 Z" fill="#d9d9d9" stroke="#c6c6c6" stroke-width="1"/><path d="M1 5 L9 9 L17 5 M9 9 V17" fill="none" stroke="#c6c6c6" stroke-width="1"/><path d="M1 5 L9 1 L17 5 L9 9 Z" fill="#cfcfcf"/></svg><svg class="a" style="left:478px;top:151px" width="18" height="18" viewBox="0 0 18 18"><path d="M2 13 Q6 4 13 1 L17 4 Q10 8 7 17 Z" fill="#d6d6d6" stroke="#c6c6c6" stroke-width=".800"/></svg><svg class="a" style="left:503px;top:151px" width="18" height="18" viewBox="0 0 18 18"><path d="M1 5 L9 1 L17 5 V13 L9 17 L1 13 Z" fill="#f2f2f2" stroke="#c6c6c6" stroke-width="1"/><path d="M1 5 L9 9 L17 5 M9 9 V17" fill="none" stroke="#c6c6c6" stroke-width="1"/><path d="M1 5 L9 1 L17 5 L9 9 Z" fill="#dcdcdc"/></svg><svg class="a" style="left:527px;top:151px" width="18" height="18" viewBox="0 0 18 18"><path d="M1 5 L9 1 L17 5 V13 L9 17 L1 13 Z" fill="#f7f7f7" stroke="#c6c6c6" stroke-width="1"/><path d="M1 5 L9 9 L17 5 M9 9 V17" fill="none" stroke="#c6c6c6" stroke-width="1"/></svg><svg class="a" style="left:553px;top:151px" width="18" height="18" viewBox="0 0 18 18"><path d="M1 16 Q3 8 8 8 Q14 8 17 1" fill="none" stroke="#c6c6c6" stroke-width="1.200"/></svg><svg class="a" style="left:577px;top:151px" width="18" height="18" viewBox="0 0 18 18"><path d="M2 3 h4 M4 1 v4 M7 9 h4 M9 7 v4 M12 14 h4 M14 12 v4" stroke="#bdbdbd" stroke-width="1"/></svg><svg class="a" style="left:603px;top:150px" width="20" height="20" viewBox="0 0 20 20"><circle cx="7" cy="7" r="3.500" fill="none" stroke="#a9a9a9"/><path d="M7 1 V13 M1 7 H13" stroke="#a9a9a9"/><path d="M9 11 H18 L15 14.500 V18.500 L12 17 V14.500 Z" fill="#fff" stroke="#888" stroke-width="1"/></svg><svg class="a" style="left:628px;top:150px" width="20" height="20" viewBox="0 0 20 20"><path d="M4 2 H1 V14 H4 M10 2 H13 V8" fill="none" stroke="#a9a9a9"/><circle cx="7" cy="8" r="3" fill="none" stroke="#a9a9a9"/><path d="M7 3 V13 M2 8 H12" stroke="#a9a9a9"/><path d="M11 14 H16 M13.500 11.500 L11 14 L13.500 16.500" fill="none" stroke="#a9a9a9"/></svg><svg class="a" style="left:653px;top:150px" width="20" height="20" viewBox="0 0 20 20"><path d="M1 5 L8 1 L15 5 V11 L8 15 L1 11 Z M1 5 L8 8.500 L15 5 M8 8.500 V15" fill="#f4f4f4" stroke="#c6c6c6" stroke-width=".900"/><circle cx="14" cy="14" r="3.500" fill="none" stroke="#a9a9a9"/><path d="M14 9 V19 M9 14 H19" stroke="#a9a9a9"/></svg><svg class="a" style="left:677px;top:150px" width="20" height="20" viewBox="0 0 20 20"><path d="M10 13 H1.500 V1.500 H12 V8" fill="none" stroke="#a9a9a9" stroke-width="1"/><circle cx="13" cy="13" r="3.500" fill="none" stroke="#777"/><path d="M13 8 V18 M8 13 H18" stroke="#777"/></svg><i class="caret" style="left:702px;top:158px;"></i><svg class="a" style="left:717px;top:151px" width="18" height="18" viewBox="0 0 18 18"><path d="M1 5 L9 1 L17 5 V13 L9 17 L1 13 Z" fill="#efefef" stroke="#c6c6c6" stroke-width="1"/><path d="M1 5 L9 9 L17 5 M9 9 V17" fill="none" stroke="#c6c6c6" stroke-width="1"/></svg><i class="a" style="left:740px;top:148px;width:24px;height:24px;background:#cfe6ee"></i><svg class="a" style="left:743px;top:151px" width="18" height="18" viewBox="0 0 18 18"><path d="M1 5 L9 1 L17 5 V13 L9 17 L1 13 Z" fill="#e9eef0" stroke="#a0a0a0" stroke-width="1"/><path d="M1 5 L9 9 L17 5 M9 9 V17" fill="none" stroke="#a0a0a0" stroke-width="1"/><path d="M9 1 V9 M1 5 L9 9 L17 5" fill="none" stroke="#e8701a" stroke-width="1.100"/></svg><i class="vsep" style="left:770px;top:150px;height:20px"></i><i class="a" style="left:780px;top:148px;width:24px;height:24px;background:#cfe6ee"></i><svg class="a" style="left:782px;top:149px" width="22" height="22" viewBox="0 0 22 22"><path d="M2 1 V8 L7 12" fill="none" stroke="#1a9a3a" stroke-width="1.100"/><path d="M2 8 L8 9.500" stroke="#e02020" stroke-width="1.100"/><text x="4" y="6.500" font-size="6.500" font-weight="bold" font-family="Liberation Sans,sans-serif" fill="#222">MCS</text><path d="M3 13 C6 8 14 8 17 13 C14 18 6 18 3 13 Z" fill="#fff" stroke="#333" stroke-width="1.100"/><circle cx="10" cy="13" r="2.600" fill="#444"/></svg><i class="a" style="left:805px;top:148px;width:24px;height:24px;background:#cfe6ee"></i><svg class="a" style="left:807px;top:149px" width="22" height="22" viewBox="0 0 22 22"><path d="M3 1 V8" stroke="#1a9a3a" stroke-width="1.100"/><path d="M3 8 L10 11" stroke="#e02020" stroke-width="1.100"/><path d="M3 8 L1 12" stroke="#2040e0" stroke-width="1.100"/><path d="M3 13 C6 8 14 8 17 13 C14 18 6 18 3 13 Z" fill="#fff" stroke="#333" stroke-width="1.100"/><circle cx="10" cy="13" r="2.600" fill="#444"/></svg><svg class="a" style="left:830px;top:149px" width="22" height="22" viewBox="0 0 22 22"><path d="M3 13 C6 8 14 8 17 13 C14 18 6 18 3 13 Z" fill="none" stroke="#333" stroke-width="1.100"/><circle cx="10" cy="13" r="2.600" fill="#444"/><path d="M3 20 L18 3 M2 8 Q9 2 17 6" fill="none" stroke="#333" stroke-width="1.200"/></svg><i class="vsep" style="left:859px;top:150px;height:20px"></i><svg class="a" style="left:868px;top:151px" width="18" height="18" viewBox="0 0 18 18"><path d="M1 5 L5 2 H13 L17 5 V14 Q9 18 1 14 Z" fill="#9c9c9c" stroke="#333" stroke-width="1.100"/><path d="M1 5 Q9 8 17 5" fill="none" stroke="#333" stroke-width="1.100"/></svg><svg class="a" style="left:892px;top:151px" width="18" height="18" viewBox="0 0 18 18"><path d="M1 5 L5 2 H13 L17 5 V14 Q9 18 1 14 Z" fill="none" stroke="#333" stroke-width="1.100"/><path d="M1 5 Q9 8 17 5" fill="none" stroke="#333" stroke-width="1.100"/><path d="M5 2 V11 M13 2 V11 M5 11 H13 M1 14 L5 11 M17 14 L13 11" stroke="#333" stroke-width="1"/></svg><svg class="a" style="left:918px;top:151px" width="18" height="18" viewBox="0 0 18 18"><path d="M1 5 L5 2 H13 L17 5 V14 Q9 18 1 14 Z" fill="none" stroke="#333" stroke-width="1.100"/><path d="M1 5 Q9 8 17 5" fill="none" stroke="#333" stroke-width="1.100"/><path d="M9 7 V16 M5 2 V11 H13 V2" fill="none" stroke="#333" stroke-width="1"/></svg><svg class="a" style="left:942px;top:151px" width="18" height="18" viewBox="0 0 18 18"><path d="M1 5 V14 Q9 18 17 14 V5" fill="#c9c9c9" stroke="#333" stroke-width="1.100"/><path d="M5 4 V12 Q9 14 13 12 V4" fill="#fff" stroke="#333" stroke-width="1"/></svg><svg class="a" style="left:968px;top:151px" width="18" height="18" viewBox="0 0 18 18"><path d="M1 5 L9 1 L17 5 V13 L9 17 L1 13 Z" fill="none" stroke="#c6c6c6" stroke-width="1"/><path d="M1 5 L9 9 L17 5 M9 9 V17" fill="none" stroke="#c6c6c6" stroke-width="1"/><path d="M5 7 L9 5 L13 7 V11 L9 13 L5 11 Z" fill="none" stroke="#c6c6c6"/></svg><svg class="a" style="left:992px;top:151px" width="18" height="18" viewBox="0 0 18 18"><path d="M1 14 L5 9 L4 5 L9 2 L12 6 L11 10 L17 14 Q9 18 1 14 Z" fill="#dedede" stroke="#c6c6c6"/></svg><svg class="a" style="left:1018px;top:151px" width="19" height="19" viewBox="0 0 19 19"><path d="M1.500 1.500 H13.500 V8 M1.500 1.500 V14.500 H8 M7.500 1.500 V14.500 M1.500 8 H13.500" fill="none" stroke="#333" stroke-width="1.300"/><path d="M17 11.500 A4 4 0 1 0 17.500 15 M17.800 9 V12 H14.800" fill="none" stroke="#333" stroke-width="1.200"/></svg><svg class="a" style="left:1042px;top:151px" width="19" height="19" viewBox="0 0 19 19"><path d="M9.500 1 L11.500 4.500 L15 3 L14 7 L18 8.500 L15 11 L16.500 15 L12 14 L9.500 18 L7 14 L2.500 15 L4 11 L1 8.500 L5 7 L4 3 L7.500 4.500 Z" fill="none" stroke="#333" stroke-width="1.300"/></svg><svg class="a" style="left:1067px;top:151px" width="20" height="20" viewBox="0 0 20 20"><rect x="1" y="1" width="12" height="12" fill="#fff" stroke="#333" stroke-width="1.200"/><rect x="6" y="6" width="12" height="12" fill="#fff" stroke="#333" stroke-width="1.200"/><rect x="6.600" y="6.600" width="6" height="6" fill="#f08020"/></svg><svg class="a" style="left:1092px;top:151px" width="18" height="18" viewBox="0 0 18 18"><rect x="1" y="1" width="16" height="16" fill="#e2e2e2" stroke="#c6c6c6"/><path d="M5 1 V7 H13 V1" fill="#f4f4f4" stroke="#c6c6c6"/></svg><i class="vsep" style="left:1117px;top:150px;height:20px"></i>
<i class="a" style="left:16px;top:174px;width:781px;height:1057px;background:#fff"></i><i class="a" style="left:0px;top:174px;width:16px;height:1057px;background:#d6d6d6"></i><i class="a" style="left:0px;top:374px;width:16px;height:43px;background:#fff"></i><svg class="a" style="left:0;top:171px" width="15" height="30" viewBox="0 0 15 30"><path d="M0 6 H3 L4 8 L7 9 L6 12 L8 14 L8 17 L6 19 L7 22 L4 23 L3 25 H0" fill="#e8e8e8" stroke="#333" stroke-width="1.100"/></svg><svg class="a" style="left:0;top:210px" width="15" height="30" viewBox="0 0 15 30"><path d="M0 8 L5 5 L12 8 V14 L8 16 V22 L0 25 Z" fill="#bdbdbd" stroke="#333" stroke-width="1.100"/><path d="M0 11 L5 9 L12 8" fill="none" stroke="#333" stroke-width=".800"/></svg><svg class="a" style="left:0;top:255px" width="15" height="30" viewBox="0 0 15 30"><path d="M0 6 L4 4 L7 7 V14 L0 17 Z" fill="#9a9a9a" stroke="#333" stroke-width="1"/><path d="M1 14 L10 24 V13 L1 24 Z" fill="#fff" stroke="#333" stroke-width="1.200"/></svg><svg class="a" style="left:0;top:303px" width="15" height="30" viewBox="0 0 15 30"><path d="M0 18 L8 14 L12 17 L4 23 L0 23 Z" fill="#c9c9c9" stroke="#333" stroke-width="1"/><path d="M0 8 H4 V17 L0 18 Z" fill="#9a9a9a" stroke="#333" stroke-width="1"/><path d="M0 23 V26 H4 L12 20 V17" fill="#8a8a8a" stroke="#333" stroke-width=".800"/></svg><svg class="a" style="left:0;top:345px" width="15" height="30" viewBox="0 0 15 30"><path d="M0 6 Q6 8 7 16 L9 22 H0 Z" fill="#e4e4e4" stroke="#333" stroke-width="1.100"/><path d="M0 25 Q4 25 4 22" fill="none" stroke="#333" stroke-width="1.100"/></svg><svg class="a" style="left:0;top:381px" width="15" height="30" viewBox="0 0 15 30"><path d="M0 6 H4 M0 10 H5 V15 H10 V21 H0 M5 10 H8 M10 15 H12 V21 H10" fill="none" stroke="#333" stroke-width="1.200"/></svg><svg class="a" style="left:0;top:425px" width="15" height="30" viewBox="0 0 15 30"><rect x="0" y="4" width="8" height="4" fill="#1a5aa8"/><rect x="0" y="8" width="8" height="4" fill="#f4f4f4" stroke="#1a5aa8" stroke-width=".600"/><path d="M0 12 H8 V20 Q4 23 0 21 Z" fill="#f07818"/><path d="M0 22 L8 20 L12 23 L3 27 H0 Z" fill="#9a9a9a" stroke="#555" stroke-width=".800"/></svg><svg class="a" style="left:0;top:473px" width="15" height="30" viewBox="0 0 15 30"><path d="M0 4 V9 L2 9 V5 Z" fill="#f07818"/><path d="M5 5 Q9 6 9 10 L10 22 L7 25 L4 22 V17 L0 19 V14 L4 13 Z" fill="#e8e8e8" stroke="#333" stroke-width="1.100"/></svg><svg class="a" style="left:0;top:517px" width="15" height="30" viewBox="0 0 15 30"><rect x="6" y="3" width="4" height="4" fill="#fff" stroke="#333"/><rect x="6" y="11" width="4" height="4" fill="#fff" stroke="#333"/><rect x="3" y="19" width="4" height="4" fill="#fff" stroke="#333"/><path d="M8 7 V11 M8 15 V17 H5 V19 M0 13 H6" fill="none" stroke="#333" stroke-dasharray="1.500 1"/><path d="M0 10 H3 V16 H0 Z" fill="#f07818"/></svg><svg class="a" style="left:0;top:562px" width="15" height="30" viewBox="0 0 15 30"><path d="M0 8 L7 5 L7 17 L0 22 Z" fill="#d0d0d0" stroke="#333" stroke-width="1.100"/><path d="M0 6 L5 3 L7 5" fill="none" stroke="#333" stroke-width="1"/></svg><svg class="a" style="left:0;top:610px" width="15" height="30" viewBox="0 0 15 30"><path d="M0 16 L6 12 L10 15 V19 L2 24 H0 Z" fill="#a8a8a8" stroke="#555" stroke-width=".900"/><path d="M1 6 L6 12 L4 6 M6 12 L10 3 M7 1 L11 5 M11 1 L7 5" fill="none" stroke="#f07818" stroke-width="1.100"/></svg><svg class="a" style="left:0;top:656px" width="15" height="30" viewBox="0 0 15 30"><circle cx="6" cy="14" r="5" fill="#fff" stroke="#333" stroke-width="1.300"/><path d="M0 17 L2 16" stroke="#333" stroke-width="2"/><path d="M0 9 Q2 8 3 10" fill="none" stroke="#333"/></svg><svg class="a" style="left:0;top:699px" width="15" height="30" viewBox="0 0 15 30"><path d="M0 8 A7 7 0 0 1 0 22 Z" fill="#8a8a8a"/><path d="M2 4 A11 11 0 0 1 2 26 M5 6 A10 10 0 0 1 5 24" fill="none" stroke="#bdbdbd" stroke-width="1.100"/></svg><svg class="a" style="left:0;top:741px" width="15" height="30" viewBox="0 0 15 30"><path d="M0 5 H10.500 V26 H0" fill="#fff" stroke="#333" stroke-width="1.100"/><path d="M0 8 H10.500" stroke="#333"/><path d="M0 10 A7 7 0 0 1 0 24 Z" fill="#1a8ac0"/><path d="M0 17 H7 M2 11 Q5 17 2 23" fill="none" stroke="#bfe4f4" stroke-width=".900"/></svg><svg class="a" style="left:0;top:785px" width="15" height="30" viewBox="0 0 15 30"><path d="M0 5 A10 10 0 0 1 0 25" fill="#e2e2e2" stroke="#333" stroke-width="1.100"/><path d="M0 15 H5" stroke="#333" stroke-width=".900"/></svg><svg class="a" style="left:0;top:830px" width="15" height="30" viewBox="0 0 15 30"><path d="M0 5 H10.500 V25 H0" fill="#fff" stroke="#333" stroke-width="1.100"/><path d="M0 10 L3 7 L8 12 L6 14 L4 12 L1 15 L5 20 L3 22 L0 19 Z" fill="#d8d8d8" stroke="#333" stroke-width="1.100"/></svg><svg class="a" style="left:0;top:872px" width="15" height="30" viewBox="0 0 15 30"><path d="M0 3 H2 V7 H0 Z" fill="#f07818"/><path d="M4 4 Q8 6 8 12 L10 22 H6 L5 16 L0 18 V13 L4 12 Z" fill="#e2e2e2" stroke="#333" stroke-width="1"/><path d="M0 19 H7 M5 16.500 L8 19 L5 21.500" fill="none" stroke="#333" stroke-width="1.200"/></svg><svg class="a" style="left:0;top:919px" width="15" height="30" viewBox="0 0 15 30"><path d="M0 8 L6 21" stroke="#111" stroke-width="2"/></svg><svg class="a" style="left:0;top:962px" width="15" height="30" viewBox="0 0 15 30"><path d="M0 10 L6 23" stroke="#111" stroke-width="2"/><path d="M0 9 L10 6 M2 12 L9 9" stroke="#2a50e0" stroke-width="1"/></svg>
<svg class="a" style="left:22px;top:178px" width="16" height="16" viewBox="0 0 16 16"><path d="M1.5 1 V6 M1.5 3.5 H5 M1.5 9 V15 M1.5 12 H7 M8 15.5 H15.5 V10 L12 7 H8 Z" fill="none" stroke="#222" stroke-width="1.2"/><path d="M5 1.5 H9 M6 4 H9" stroke="#222" stroke-width="1.2"/></svg><span class="t tr" style="left:42px;top:179.5px;font-size:12.6px;letter-spacing:-0.49px;">工序导航器</span><i class="a" style="left:773px;top:181px;width:12px;height:11px;border:1.300px solid #111;border-top-width:2.500px"></i>
<i class="a" style="left:28px;top:205px;width:32px;height:32px;background:#cfe6ee"></i><svg class="a" style="left:31px;top:208px" width="26" height="26" viewBox="0 0 26 26"><rect x="1" y="1" width="9" height="11" fill="#e8e8e8" stroke="#555"/><path d="M3 3.5h1M6 3.5h1M3 6h1M6 6h1M3 8.500h1M6 8.500h1" stroke="#555"/><path d="M8 6 L14 4 V14 L8 16 Z" fill="#bbb" stroke="#666" stroke-width=".7"/><rect x="13.500" y="9.500" width="11" height="15" fill="#fff" stroke="#111" stroke-width="1.2"/><path d="M17 12.500 V21 H20 M17 16.500 H20" fill="none" stroke="#111" stroke-width="1.1"/><rect x="16" y="11.500" width="2.500" height="2.500" fill="#fff" stroke="#111"/><rect x="19.500" y="15.300" width="2.500" height="2.500" fill="#fff" stroke="#111"/><rect x="19.500" y="19.800" width="2.500" height="2.500" fill="#fff" stroke="#111"/></svg><svg class="a" style="left:65px;top:208px" width="26" height="26" viewBox="0 0 26 26"><rect x="13" y="1" width="8.500" height="10" fill="#9a9a9a" stroke="#555"/><rect x="10" y="7" width="6" height="6" rx="1.500" fill="#f08a24"/><rect x="1" y="5" width="8" height="19" rx="1.500" fill="#f08a24"/><path d="M1 10 L9 7 M1 14.500 L9 11.500 M1 19 L9 16 M1 23.500 L9 20.500" stroke="#d0c0b0" stroke-width="1.500"/><rect x="13.500" y="9.500" width="11" height="15" fill="#fff" stroke="#111" stroke-width="1.2"/><path d="M17 12.500 V21 H20 M17 16.500 H20" fill="none" stroke="#111" stroke-width="1.1"/><rect x="16" y="11.500" width="2.500" height="2.500" fill="#fff" stroke="#111"/><rect x="19.500" y="15.300" width="2.500" height="2.500" fill="#fff" stroke="#111"/><rect x="19.500" y="19.800" width="2.500" height="2.500" fill="#fff" stroke="#111"/></svg><svg class="a" style="left:99px;top:208px" width="26" height="26" viewBox="0 0 26 26"><path d="M10 2 L16 1 L20 10 L14 14 Z" fill="#9a9a9a" stroke="#555"/><ellipse cx="6" cy="11" rx="5" ry="6.500" fill="#f08a24"/><rect x="6" y="4.500" width="7" height="13" fill="#f39a3a"/><ellipse cx="13" cy="11" rx="3" ry="6.500" fill="#e07818"/><rect x="13.500" y="9.500" width="11" height="15" fill="#fff" stroke="#111" stroke-width="1.2"/><path d="M17 12.500 V21 H20 M17 16.500 H20" fill="none" stroke="#111" stroke-width="1.1"/><rect x="16" y="11.500" width="2.500" height="2.500" fill="#fff" stroke="#111"/><rect x="19.500" y="15.300" width="2.500" height="2.500" fill="#fff" stroke="#111"/><rect x="19.500" y="19.800" width="2.500" height="2.500" fill="#fff" stroke="#111"/></svg><svg class="a" style="left:133px;top:208px" width="26" height="26" viewBox="0 0 26 26"><path d="M1 2 V8 H20 V2 M1 5 Q4 8 7.500 5 Q11 8 14 5 Q17 8 20 5" fill="none" stroke="#333" stroke-width="1.2"/><path d="M1 11 V18 H13 M1 14 Q4 17 7.500 14 Q11 17 13 14.500" fill="none" stroke="#333" stroke-width="1.2"/><rect x="13.500" y="9.500" width="11" height="15" fill="#fff" stroke="#111" stroke-width="1.2"/><path d="M17 12.500 V21 H20 M17 16.500 H20" fill="none" stroke="#111" stroke-width="1.1"/><rect x="16" y="11.500" width="2.500" height="2.500" fill="#fff" stroke="#111"/><rect x="19.500" y="15.300" width="2.500" height="2.500" fill="#fff" stroke="#111"/><rect x="19.500" y="19.800" width="2.500" height="2.500" fill="#fff" stroke="#111"/></svg><i class="a" style="left:166px;top:205px;width:32px;height:32px;border:1px solid #8a8a8a;background:#fff"></i><svg class="a" style="left:169px;top:208px" width="26" height="26" viewBox="0 0 26 26"><path d="M12 19.500 H2 V1.600 H19 V12" fill="none" stroke="#3c3c3c" stroke-width="1.100"/><path d="M2 4.800 H19" stroke="#3c3c3c" stroke-width="1"/><path d="M13 3.200 h1 M15 3.200 h1 M17 3.200 h1" stroke="#3c3c3c" stroke-width="1"/><circle cx="18.500" cy="18.600" r="6.600" fill="#fff" stroke="#3c3c3c" stroke-width="1.100"/><path d="M14.500 18.600 H22.500 M18.500 14.600 V22.600" stroke="#3c3c3c" stroke-width="1.100"/></svg><i class="a" style="left:202px;top:205px;width:32px;height:32px;border:1px solid #d2d2d2;background:#fff"></i><svg class="a" style="left:205px;top:208px" width="26" height="26" viewBox="0 0 26 26"><path d="M12 19.500 H2 V1.600 H19 V12" fill="none" stroke="#cfcfcf" stroke-width="1.100"/><path d="M2 4.800 H19" stroke="#cfcfcf" stroke-width="1"/><path d="M13 3.200 h1 M15 3.200 h1 M17 3.200 h1" stroke="#cfcfcf" stroke-width="1"/><path d="M14 13.500 L24 23.500 M24 13.500 L14 23.500" stroke="#c9c9c9" stroke-width="1.300"/></svg>
<i class="a" style="left:31px;top:242px;width:766px;height:22px;background:#f0f0f0;border-top:1px solid #dcdcdc;border-bottom:1px solid #cfcfcf;border-left:1px solid #dcdcdc"></i><i class="vsep" style="left:265px;top:243px;height:20px;background:#d0d0d0"></i><i class="vsep" style="left:296px;top:243px;height:20px;background:#d0d0d0"></i><i class="vsep" style="left:330px;top:243px;height:20px;background:#d0d0d0"></i><i class="vsep" style="left:412px;top:243px;height:20px;background:#d0d0d0"></i><i class="vsep" style="left:463px;top:243px;height:20px;background:#d0d0d0"></i><i class="vsep" style="left:509.5px;top:243px;height:20px;background:#d0d0d0"></i><i class="vsep" style="left:565px;top:243px;height:20px;background:#d0d0d0"></i><i class="vsep" style="left:637px;top:243px;height:20px;background:#d0d0d0"></i><i class="vsep" style="left:717px;top:243px;height:20px;background:#d0d0d0"></i><i class="vsep" style="left:781px;top:243px;height:20px;background:#d0d0d0"></i><span class="t tr cj" style="left:38px;top:246.5px;">标题</span><span class="t tr cj" style="left:272px;top:246.5px;">刀..</span><span class="t tr cj" style="left:302.5px;top:246.5px;">刀...</span><span class="t tr cj" style="left:337px;top:246.5px;">工具</span><span class="t tr cj" style="left:418px;top:246.5px;">余量</span><span class="t tr cj" style="left:469.5px;top:246.5px;">底面...</span><span class="t tr cj" style="left:515px;top:246.5px;">切</span>
<div class="a" style="left:31px;top:264px;width:766px;height:967px;background:repeating-linear-gradient(#fff 0,#fff 19px,#ececec 19px,#ececec 20px,#f8f8f8 20px,#f8f8f8 39px,#ececec 39px,#ececec 40px);border-left:1px solid #e2e2e2"></div>
<i class="vsep" style="left:296px;top:264px;height:967px;background:#e6e6e6"></i><i class="vsep" style="left:330px;top:264px;height:967px;background:#e6e6e6"></i><i class="vsep" style="left:412px;top:264px;height:967px;background:#e6e6e6"></i><i class="vsep" style="left:463px;top:264px;height:967px;background:#e6e6e6"></i><i class="vsep" style="left:509.5px;top:264px;height:967px;background:#e6e6e6"></i><i class="vsep" style="left:565px;top:264px;height:967px;background:#e6e6e6"></i><i class="vsep" style="left:637px;top:264px;height:967px;background:#e6e6e6"></i><i class="vsep" style="left:717px;top:264px;height:967px;background:#e6e6e6"></i><i class="vsep" style="left:781px;top:264px;height:967px;background:#e6e6e6"></i><i class="a" style="left:140px;top:344px;width:657px;height:19px;background:#cde4ec"></i><i class="vsep" style="left:296px;top:344px;height:19px;background:#dceef3"></i><i class="vsep" style="left:330px;top:344px;height:19px;background:#dceef3"></i><i class="vsep" style="left:412px;top:344px;height:19px;background:#dceef3"></i><i class="vsep" style="left:463px;top:344px;height:19px;background:#dceef3"></i><i class="vsep" style="left:509.5px;top:344px;height:19px;background:#dceef3"></i>
<i class="a" style="left:60px;top:284px;width:0px;height:30px;border-left:1px dotted #9a9a9a"></i><i class="a" style="left:60px;top:294px;width:9px;height:0px;border-top:1px dotted #9a9a9a"></i><i class="a" style="left:79px;top:324px;width:0px;height:540px;border-left:1px dotted #9a9a9a"></i><i class="a" style="left:98px;top:344px;width:0px;height:290px;border-left:1px dotted #9a9a9a"></i><i class="a" style="left:98px;top:664px;width:0px;height:70px;border-left:1px dotted #9a9a9a"></i><i class="a" style="left:98px;top:764px;width:0px;height:70px;border-left:1px dotted #9a9a9a"></i><i class="a" style="left:98px;top:864px;width:0px;height:70px;border-left:1px dotted #9a9a9a"></i><i class="a" style="left:47px;top:274px;width:5px;height:0px;border-top:1px dotted #9a9a9a"></i><i class="a" style="left:65px;top:314px;width:5px;height:0px;border-top:1px dotted #9a9a9a"></i><i class="a" style="left:84px;top:334px;width:5px;height:0px;border-top:1px dotted #9a9a9a"></i><i class="a" style="left:84px;top:654px;width:5px;height:0px;border-top:1px dotted #9a9a9a"></i><i class="a" style="left:84px;top:754px;width:5px;height:0px;border-top:1px dotted #9a9a9a"></i><i class="a" style="left:84px;top:854px;width:5px;height:0px;border-top:1px dotted #9a9a9a"></i>
<svg class="a" style="left:37.5px;top:269.7px;" width="9" height="9"><use href="#ex"/></svg><svg class="a" style="left:52px;top:266.5px;" width="15" height="15"><use href="#no"/></svg><svg class="a" style="left:67px;top:266.5px;" width="16" height="14"><use href="#fd"/></svg><span class="t tr" style="left:86px;top:266px;font-size:12px;letter-spacing:-0.10px;">NC_PROGRAM</span>
<svg class="a" style="left:69px;top:286.5px;" width="16" height="14"><use href="#fd"/></svg><span class="t tr" style="left:89px;top:286px;font-size:12.6px;letter-spacing:-0.59px;">未用项</span>
<svg class="a" style="left:55.5px;top:309.7px;" width="9" height="9"><use href="#ex"/></svg><svg class="a" style="left:71px;top:306.5px;" width="15" height="15"><use href="#no"/></svg><svg class="a" style="left:86px;top:306.5px;" width="16" height="14"><use href="#fd"/></svg><span class="t tr" style="left:105px;top:306px;font-size:12px;letter-spacing:0.33px;">CNC</span>
<svg class="a" style="left:74.5px;top:329.7px;" width="9" height="9"><use href="#ex"/></svg><svg class="a" style="left:89.5px;top:327.5px;" width="15" height="13"><use href="#ck"/></svg><svg class="a" style="left:105px;top:326.5px;" width="16" height="14"><use href="#fd"/></svg><span class="t tr" style="left:124px;top:326px;font-size:12px;letter-spacing:0.21px;">69A</span>
<i class="a" style="left:99px;top:354px;width:8px;height:0px;border-top:1px dotted #9a9a9a"></i><svg class="a" style="left:108.5px;top:347.5px;" width="15" height="13"><use href="#ck"/></svg><svg class="a" style="left:124px;top:346px;" width="16" height="16"><use href="#opf"/></svg><span class="t tr" style="left:143px;top:346px;font-size:12px;letter-spacing:-0.13px;">FACE_MILLING</span><svg class="a" style="left:270px;top:348px;" width="15" height="13"><use href="#ck"/></svg><span class="t tr" style="left:301px;top:346px;">24</span><span class="t tr" style="left:335px;top:346px;">D80R5</span><span class="t tr" style="left:417px;top:346px;font-size:12px;letter-spacing:0.13px;">0.0000</span><span class="t tr" style="left:469px;top:346px;font-size:12px;letter-spacing:0.13px;">0.0000</span><span class="t tr" style="left:514px;top:346px;width:5px;overflow:hidden">0</span>
<i class="a" style="left:99px;top:374px;width:8px;height:0px;border-top:1px dotted #9a9a9a"></i><svg class="a" style="left:108.5px;top:367.5px;" width="15" height="13"><use href="#ck"/></svg><svg class="a" style="left:124px;top:366px;" width="16" height="16"><use href="#opp"/></svg><span class="t tr pu" style="left:143px;top:366px;font-size:12px;letter-spacing:-0.47px;">PLANAR_PROFILE</span><svg class="a" style="left:270px;top:368px;" width="15" height="13"><use href="#ck"/></svg><span class="t tr pu" style="left:301px;top:366px;">2</span><span class="t tr pu" style="left:335px;top:366px;">D10</span><span class="t tr pu" style="left:417px;top:366px;font-size:12px;letter-spacing:0.13px;">0.1000</span><span class="t tr pu" style="left:469px;top:366px;font-size:12px;letter-spacing:0.13px;">0.0000</span><span class="t tr pu" style="left:514px;top:366px;width:5px;overflow:hidden">0</span>
<i class="a" style="left:99px;top:394px;width:8px;height:0px;border-top:1px dotted #9a9a9a"></i><svg class="a" style="left:108.5px;top:387.5px;" width="15" height="13"><use href="#ck"/></svg><svg class="a" style="left:124px;top:386px;" width="16" height="16"><use href="#opp"/></svg><span class="t tr" style="left:143px;top:386px;font-size:12px;letter-spacing:-0.48px;">PLANAR_PROFILE_...</span><svg class="a" style="left:270px;top:388px;" width="15" height="13"><use href="#ck"/></svg><span class="t tr" style="left:301px;top:386px;">2</span><span class="t tr" style="left:335px;top:386px;">D10</span><span class="t tr" style="left:417px;top:386px;font-size:12px;letter-spacing:0.13px;">0.0500</span><span class="t tr" style="left:469px;top:386px;font-size:12px;letter-spacing:0.13px;">0.0000</span><span class="t tr" style="left:514px;top:386px;width:5px;overflow:hidden">0</span>
<i class="a" style="left:99px;top:414px;width:8px;height:0px;border-top:1px dotted #9a9a9a"></i><svg class="a" style="left:108.5px;top:407.5px;" width="15" height="13"><use href="#ck"/></svg><svg class="a" style="left:124px;top:406px;" width="16" height="16"><use href="#opp"/></svg><span class="t tr pu" style="left:143px;top:406px;font-size:12px;letter-spacing:-0.48px;">PLANAR_PROFILE_...</span><svg class="a" style="left:270px;top:408px;" width="15" height="13"><use href="#ck"/></svg><span class="t tr pu" style="left:301px;top:406px;">6</span><span class="t tr pu" style="left:335px;top:406px;">D6</span><span class="t tr pu" style="left:417.5px;top:406px;font-size:12px;letter-spacing:0.26px;">-0.0150</span><span class="t tr pu" style="left:469px;top:406px;font-size:12px;letter-spacing:0.13px;">0.0000</span><span class="t tr pu" style="left:514px;top:406px;width:5px;overflow:hidden">0</span>
<i class="a" style="left:99px;top:434px;width:8px;height:0px;border-top:1px dotted #9a9a9a"></i><svg class="a" style="left:108.5px;top:427.5px;" width="15" height="13"><use href="#ck"/></svg><svg class="a" style="left:124px;top:426px;" width="16" height="16"><use href="#opd"/></svg><span class="t tr pu" style="left:143px;top:426px;font-size:12px;letter-spacing:-0.28px;">PECK_DRILLING</span><svg class="a" style="left:270px;top:428px;" width="15" height="13"><use href="#ck"/></svg><span class="t tr pu" style="left:301px;top:426px;">1</span><span class="t tr pu" style="left:335px;top:426px;"><span class="cj">倒角刀</span>D6</span><span class="t tr pu" style="left:514px;top:426px;width:5px;overflow:hidden">1</span>
<i class="a" style="left:99px;top:454px;width:8px;height:0px;border-top:1px dotted #9a9a9a"></i><svg class="a" style="left:108.5px;top:447.5px;" width="15" height="13"><use href="#ck"/></svg><svg class="a" style="left:124px;top:446px;" width="16" height="16"><use href="#opd"/></svg><span class="t tr pu" style="left:143px;top:446px;font-size:12px;letter-spacing:-0.36px;">PECK_DRILLING_C...</span><svg class="a" style="left:270px;top:448px;" width="15" height="13"><use href="#ck"/></svg><span class="t tr pu" style="left:301px;top:446px;">7</span><span class="t tr pu" style="left:335px;top:446px;"><span class="cj">钻头</span>2.4</span><span class="t tr pu cj" style="left:514px;top:446px;width:5px;overflow:hidden">穿</span>
<i class="a" style="left:99px;top:474px;width:8px;height:0px;border-top:1px dotted #9a9a9a"></i><svg class="a" style="left:108.5px;top:467.5px;" width="15" height="13"><use href="#ck"/></svg><svg class="a" style="left:124px;top:466px;" width="16" height="16"><use href="#opd"/></svg><span class="t tr pu" style="left:143px;top:466px;font-size:12px;letter-spacing:-0.36px;">PECK_DRILLING_C...</span><svg class="a" style="left:270px;top:468px;" width="15" height="13"><use href="#ck"/></svg><span class="t tr pu" style="left:301px;top:466px;">8</span><span class="t tr pu" style="left:335px;top:466px;"><span class="cj">钻头</span>3.3</span><span class="t tr pu" style="left:514px;top:466px;width:5px;overflow:hidden">9</span>
<i class="a" style="left:99px;top:494px;width:8px;height:0px;border-top:1px dotted #9a9a9a"></i><svg class="a" style="left:108.5px;top:487.5px;" width="15" height="13"><use href="#ck"/></svg><svg class="a" style="left:124px;top:486px;" width="16" height="16"><use href="#opd"/></svg><span class="t tr pu" style="left:143px;top:486px;font-size:12px;letter-spacing:-0.36px;">PECK_DRILLING_C...</span><svg class="a" style="left:270px;top:488px;" width="15" height="13"><use href="#ck"/></svg><span class="t tr pu" style="left:301px;top:486px;">10</span><span class="t tr pu" style="left:335px;top:486px;"><span class="cj">钻头</span>4.5</span><span class="t tr pu cj" style="left:514px;top:486px;width:5px;overflow:hidden">穿</span>
<i class="a" style="left:99px;top:514px;width:8px;height:0px;border-top:1px dotted #9a9a9a"></i><svg class="a" style="left:108.5px;top:507.5px;" width="15" height="13"><use href="#ck"/></svg><svg class="a" style="left:124px;top:506px;" width="16" height="16"><use href="#opd"/></svg><span class="t tr pu" style="left:143px;top:506px;font-size:12px;letter-spacing:-0.36px;">PECK_DRILLING_C...</span><svg class="a" style="left:270px;top:508px;" width="15" height="13"><use href="#ck"/></svg><span class="t tr pu" style="left:301px;top:506px;">12</span><span class="t tr pu" style="left:335px;top:506px;"><span class="cj">钻头</span>5.5</span><span class="t tr pu cj" style="left:514px;top:506px;width:5px;overflow:hidden">穿</span>
<i class="a" style="left:99px;top:534px;width:8px;height:0px;border-top:1px dotted #9a9a9a"></i><svg class="a" style="left:108.5px;top:527.5px;" width="15" height="13"><use href="#ck"/></svg><svg class="a" style="left:124px;top:526px;" width="16" height="16"><use href="#opz"/></svg><span class="t tr pu" style="left:143px;top:526px;font-size:12px;letter-spacing:-0.56px;">ZLEVEL_PROFILE_1...</span><svg class="a" style="left:270px;top:528px;" width="15" height="13"><use href="#ck"/></svg><span class="t tr pu" style="left:301px;top:526px;">14</span><span class="t tr pu" style="left:335px;top:526px;">D2</span><span class="t tr pu" style="left:417.5px;top:526px;font-size:12px;letter-spacing:0.26px;">-0.0150</span><span class="t tr pu" style="left:469px;top:526px;font-size:12px;letter-spacing:0.13px;">0.0000</span><span class="t tr pu" style="left:514px;top:526px;width:5px;overflow:hidden">.1</span>
<i class="a" style="left:99px;top:554px;width:8px;height:0px;border-top:1px dotted #9a9a9a"></i><svg class="a" style="left:108.5px;top:547.5px;" width="15" height="13"><use href="#ck"/></svg><svg class="a" style="left:124px;top:546px;" width="16" height="16"><use href="#opf"/></svg><span class="t tr" style="left:143px;top:546px;font-size:12px;letter-spacing:-0.30px;">FACE_MILLING_2_C...</span><svg class="a" style="left:270px;top:548px;" width="15" height="13"><use href="#ck"/></svg><span class="t tr" style="left:301px;top:546px;">14</span><span class="t tr" style="left:335px;top:546px;">D2</span><span class="t tr" style="left:417.5px;top:546px;font-size:12px;letter-spacing:0.26px;">-0.0200</span><span class="t tr" style="left:469px;top:546px;font-size:12px;letter-spacing:0.13px;">0.0000</span><span class="t tr" style="left:514px;top:546px;width:5px;overflow:hidden">0</span>
<i class="a" style="left:99px;top:574px;width:8px;height:0px;border-top:1px dotted #9a9a9a"></i><svg class="a" style="left:108.5px;top:567.5px;" width="15" height="13"><use href="#ck"/></svg><svg class="a" style="left:124px;top:566px;" width="16" height="16"><use href="#opz"/></svg><span class="t tr" style="left:143px;top:566px;font-size:12px;letter-spacing:-0.66px;">ZLEVEL_PROFILE_1</span><svg class="a" style="left:270px;top:568px;" width="15" height="13"><use href="#ck"/></svg><span class="t tr" style="left:301px;top:566px;">14</span><span class="t tr" style="left:335px;top:566px;">D2</span><span class="t tr" style="left:417px;top:566px;font-size:12px;letter-spacing:0.13px;">0.0500</span><span class="t tr" style="left:469px;top:566px;font-size:12px;letter-spacing:0.13px;">0.0000</span><span class="t tr" style="left:514px;top:566px;width:5px;overflow:hidden">.1</span>
<i class="a" style="left:99px;top:594px;width:8px;height:0px;border-top:1px dotted #9a9a9a"></i><svg class="a" style="left:108.5px;top:587.5px;" width="15" height="13"><use href="#ck"/></svg><svg class="a" style="left:124px;top:586px;" width="16" height="16"><use href="#opz"/></svg><span class="t tr" style="left:143px;top:586px;font-size:12.6px;letter-spacing:-0.28px;">含刀补-D4销孔</span><svg class="a" style="left:270px;top:588px;" width="15" height="13"><use href="#ck"/></svg><span class="t tr" style="left:301px;top:586px;">14</span><span class="t tr" style="left:335px;top:586px;">D2</span><span class="t tr" style="left:417.5px;top:586px;font-size:12px;letter-spacing:0.26px;">-0.0150</span><span class="t tr" style="left:469px;top:586px;font-size:12px;letter-spacing:0.13px;">0.0000</span><span class="t tr" style="left:514px;top:586px;width:5px;overflow:hidden">.2</span>
<i class="a" style="left:99px;top:614px;width:8px;height:0px;border-top:1px dotted #9a9a9a"></i><svg class="a" style="left:108.5px;top:607.5px;" width="15" height="13"><use href="#ck"/></svg><svg class="a" style="left:124px;top:606px;" width="16" height="16"><use href="#opz"/></svg><span class="t tr pu" style="left:143px;top:606px;font-size:12px;letter-spacing:-0.63px;">ZLEVEL_PROFILE_C...</span><svg class="a" style="left:270px;top:608px;" width="15" height="13"><use href="#ck"/></svg><span class="t tr pu" style="left:301px;top:606px;">4</span><span class="t tr pu" style="left:335px;top:606px;">D6</span><span class="t tr pu" style="left:417.5px;top:606px;font-size:12px;letter-spacing:0.26px;">-0.0150</span><span class="t tr pu" style="left:469px;top:606px;font-size:12px;letter-spacing:0.13px;">0.0000</span><span class="t tr pu" style="left:514px;top:606px;width:5px;overflow:hidden">.3</span>
<i class="a" style="left:99px;top:634px;width:8px;height:0px;border-top:1px dotted #9a9a9a"></i><svg class="a" style="left:108.5px;top:627.5px;" width="15" height="13"><use href="#ck"/></svg><svg class="a" style="left:124px;top:626px;" width="16" height="16"><use href="#opp"/></svg><span class="t tr pu" style="left:143px;top:626px;font-size:12px;letter-spacing:-0.48px;">PLANAR_PROFILE_...</span><svg class="a" style="left:270px;top:628px;" width="15" height="13"><use href="#ck"/></svg><span class="t tr pu" style="left:301px;top:626px;">1</span><span class="t tr pu" style="left:335px;top:626px;"><span class="cj">倒角刀</span>D6</span><span class="t tr pu" style="left:417.5px;top:626px;font-size:12px;letter-spacing:0.26px;">-0.5000</span><span class="t tr pu" style="left:469px;top:626px;font-size:12px;letter-spacing:0.13px;">0.0000</span><span class="t tr pu" style="left:514px;top:626px;width:5px;overflow:hidden">0</span>
<svg class="a" style="left:74.5px;top:649.7px;" width="9" height="9"><use href="#ex"/></svg><svg class="a" style="left:90px;top:646.5px;" width="15" height="15"><use href="#no"/></svg><svg class="a" style="left:105px;top:646.5px;" width="16" height="14"><use href="#fd"/></svg><span class="t tr" style="left:124px;top:646px;font-size:12px;letter-spacing:0.21px;">69B</span>
<i class="a" style="left:99px;top:674px;width:8px;height:0px;border-top:1px dotted #9a9a9a"></i><svg class="a" style="left:108.5px;top:667.5px;" width="15" height="13"><use href="#ck"/></svg><svg class="a" style="left:124px;top:666px;" width="16" height="16"><use href="#opf"/></svg><span class="t tr pu" style="left:143px;top:666px;font-size:12px;letter-spacing:-0.30px;">FACE_MILLING_1_C...</span><svg class="a" style="left:270px;top:668px;" width="15" height="13"><use href="#ck"/></svg><span class="t tr pu" style="left:301px;top:666px;">24</span><span class="t tr pu" style="left:335px;top:666px;">D80R5</span><span class="t tr pu" style="left:417px;top:666px;font-size:12px;letter-spacing:0.13px;">0.1000</span><span class="t tr pu" style="left:469px;top:666px;font-size:12px;letter-spacing:0.13px;">0.1000</span><span class="t tr pu" style="left:514px;top:666px;width:5px;overflow:hidden">0</span>
<i class="a" style="left:99px;top:694px;width:8px;height:0px;border-top:1px dotted #9a9a9a"></i><svg class="a" style="left:108.5px;top:687.5px;" width="15" height="13"><use href="#ck"/></svg><svg class="a" style="left:124px;top:686px;" width="16" height="16"><use href="#opf"/></svg><span class="t tr" style="left:143px;top:686px;font-size:12px;letter-spacing:-0.21px;">FACE_MILLING_CO...</span><svg class="a" style="left:270px;top:688px;" width="15" height="13"><use href="#ck"/></svg><span class="t tr" style="left:301px;top:686px;">24</span><span class="t tr" style="left:335px;top:686px;">D80R5</span><span class="t tr" style="left:417px;top:686px;font-size:12px;letter-spacing:0.13px;">0.0000</span><span class="t tr" style="left:469px;top:686px;font-size:12px;letter-spacing:0.13px;">0.0000</span><span class="t tr" style="left:514px;top:686px;width:5px;overflow:hidden">0</span>
<i class="a" style="left:99px;top:714px;width:8px;height:0px;border-top:1px dotted #9a9a9a"></i><svg class="a" style="left:108.5px;top:707.5px;" width="15" height="13"><use href="#ck"/></svg><svg class="a" style="left:124px;top:706px;" width="16" height="16"><use href="#opz"/></svg><span class="t tr pu" style="left:143px;top:706px;font-size:12px;letter-spacing:-0.63px;">ZLEVEL_PROFILE_C...</span><svg class="a" style="left:270px;top:708px;" width="15" height="13"><use href="#ck"/></svg><span class="t tr pu" style="left:301px;top:706px;">5</span><span class="t tr pu" style="left:335px;top:706px;">D4</span><span class="t tr pu" style="left:417.5px;top:706px;font-size:12px;letter-spacing:0.26px;">-0.0150</span><span class="t tr pu" style="left:469px;top:706px;font-size:12px;letter-spacing:0.13px;">0.0000</span><span class="t tr pu" style="left:514px;top:706px;width:5px;overflow:hidden">.2</span>
<i class="a" style="left:99px;top:734px;width:8px;height:0px;border-top:1px dotted #9a9a9a"></i><svg class="a" style="left:109px;top:726.5px;" width="15" height="15"><use href="#no"/></svg><svg class="a" style="left:124px;top:726px;" width="16" height="16"><use href="#opp"/></svg><span class="t tr pu" style="left:143px;top:726px;font-size:12px;letter-spacing:-0.48px;">PLANAR_PROFILE_...</span><svg class="a" style="left:270px;top:728px;" width="15" height="13"><use href="#ck"/></svg><span class="t tr pu" style="left:301px;top:726px;">1</span><span class="t tr pu" style="left:335px;top:726px;"><span class="cj">倒角刀</span>D6</span><span class="t tr pu" style="left:417.5px;top:726px;font-size:12px;letter-spacing:0.26px;">-0.5000</span><span class="t tr pu" style="left:469px;top:726px;font-size:12px;letter-spacing:0.13px;">0.0000</span><span class="t tr pu" style="left:514px;top:726px;width:5px;overflow:hidden">0</span>
<svg class="a" style="left:74.5px;top:749.7px;" width="9" height="9"><use href="#ex"/></svg><svg class="a" style="left:90px;top:746.5px;" width="15" height="15"><use href="#no"/></svg><svg class="a" style="left:105px;top:746.5px;" width="16" height="14"><use href="#fd"/></svg><span class="t tr" style="left:124px;top:746px;font-size:12px;">69C</span>
<i class="a" style="left:99px;top:774px;width:8px;height:0px;border-top:1px dotted #9a9a9a"></i><svg class="a" style="left:108.5px;top:767.5px;" width="15" height="13"><use href="#ck"/></svg><svg class="a" style="left:124px;top:766px;" width="16" height="16"><use href="#opf"/></svg><span class="t tr pu" style="left:143px;top:766px;font-size:12px;letter-spacing:-0.13px;">FACE_MILLING_2</span><svg class="a" style="left:270px;top:768px;" width="15" height="13"><use href="#ck"/></svg><span class="t tr pu" style="left:301px;top:766px;">4</span><span class="t tr pu" style="left:335px;top:766px;">D6</span><span class="t tr pu" style="left:417px;top:766px;font-size:12px;letter-spacing:0.13px;">0.1500</span><span class="t tr pu" style="left:469px;top:766px;font-size:12px;letter-spacing:0.13px;">0.1000</span><span class="t tr pu" style="left:514px;top:766px;width:5px;overflow:hidden">0</span>
<i class="a" style="left:99px;top:794px;width:8px;height:0px;border-top:1px dotted #9a9a9a"></i><svg class="a" style="left:108.5px;top:787.5px;" width="15" height="13"><use href="#ck"/></svg><svg class="a" style="left:124px;top:786px;" width="16" height="16"><use href="#opf"/></svg><span class="t tr" style="left:143px;top:786px;font-size:12px;letter-spacing:-0.30px;">FACE_MILLING_2_C...</span><svg class="a" style="left:270px;top:788px;" width="15" height="13"><use href="#ck"/></svg><span class="t tr" style="left:301px;top:786px;">6</span><span class="t tr" style="left:335px;top:786px;">D6</span><span class="t tr" style="left:417px;top:786px;font-size:12px;letter-spacing:0.13px;">0.4000</span><span class="t tr" style="left:469px;top:786px;font-size:12px;letter-spacing:0.13px;">0.0000</span><span class="t tr" style="left:514px;top:786px;width:5px;overflow:hidden">0</span>
<i class="a" style="left:99px;top:814px;width:8px;height:0px;border-top:1px dotted #9a9a9a"></i><svg class="a" style="left:108.5px;top:807.5px;" width="15" height="13"><use href="#ck"/></svg><svg class="a" style="left:124px;top:806px;" width="16" height="16"><use href="#opp"/></svg><span class="t tr" style="left:143px;top:806px;font-size:12px;letter-spacing:-0.48px;">PLANAR_PROFILE_...</span><svg class="a" style="left:270px;top:808px;" width="15" height="13"><use href="#ck"/></svg><span class="t tr" style="left:301px;top:806px;">6</span><span class="t tr" style="left:335px;top:806px;">D6</span><span class="t tr" style="left:417.5px;top:806px;font-size:12px;letter-spacing:0.26px;">-0.0150</span><span class="t tr" style="left:469px;top:806px;font-size:12px;letter-spacing:0.13px;">0.0000</span><span class="t tr" style="left:514px;top:806px;width:5px;overflow:hidden">0</span>
<i class="a" style="left:99px;top:834px;width:8px;height:0px;border-top:1px dotted #9a9a9a"></i><svg class="a" style="left:109px;top:826.5px;" width="15" height="15"><use href="#no"/></svg><svg class="a" style="left:124px;top:826px;" width="16" height="16"><use href="#opp"/></svg><span class="t tr pu" style="left:143px;top:826px;font-size:12px;letter-spacing:-0.48px;">PLANAR_PROFILE_...</span><svg class="a" style="left:270px;top:828px;" width="15" height="13"><use href="#ck"/></svg><span class="t tr pu" style="left:301px;top:826px;">1</span><span class="t tr pu" style="left:335px;top:826px;"><span class="cj">倒角刀</span>D6</span><span class="t tr pu" style="left:417.5px;top:826px;font-size:12px;letter-spacing:0.26px;">-0.5000</span><span class="t tr pu" style="left:469px;top:826px;font-size:12px;letter-spacing:0.13px;">0.0000</span><span class="t tr pu" style="left:514px;top:826px;width:5px;overflow:hidden">0</span>
<svg class="a" style="left:74.5px;top:849.7px;" width="9" height="9"><use href="#ex"/></svg><svg class="a" style="left:90px;top:846.5px;" width="15" height="15"><use href="#no"/></svg><svg class="a" style="left:105px;top:846.5px;" width="16" height="14"><use href="#fd"/></svg><span class="t tr" style="left:124px;top:846px;font-size:12px;letter-spacing:0.33px;">69D</span>
<i class="a" style="left:99px;top:874px;width:8px;height:0px;border-top:1px dotted #9a9a9a"></i><svg class="a" style="left:108.5px;top:867.5px;" width="15" height="13"><use href="#ck"/></svg><svg class="a" style="left:124px;top:866px;" width="16" height="16"><use href="#opf"/></svg><span class="t tr pu" style="left:143px;top:866px;font-size:12px;letter-spacing:-0.30px;">FACE_MILLING_2_C...</span><svg class="a" style="left:270px;top:868px;" width="15" height="13"><use href="#ck"/></svg><span class="t tr pu" style="left:301px;top:866px;">4</span><span class="t tr pu" style="left:335px;top:866px;">D6</span><span class="t tr pu" style="left:417px;top:866px;font-size:12px;letter-spacing:0.13px;">0.1500</span><span class="t tr pu" style="left:469px;top:866px;font-size:12px;letter-spacing:0.13px;">0.1000</span><span class="t tr pu" style="left:514px;top:866px;width:5px;overflow:hidden">0</span>
<i class="a" style="left:99px;top:894px;width:8px;height:0px;border-top:1px dotted #9a9a9a"></i><svg class="a" style="left:108.5px;top:887.5px;" width="15" height="13"><use href="#ck"/></svg><svg class="a" style="left:124px;top:886px;" width="16" height="16"><use href="#opf"/></svg><span class="t tr" style="left:143px;top:886px;font-size:12px;letter-spacing:-0.30px;">FACE_MILLING_2_C...</span><svg class="a" style="left:270px;top:888px;" width="15" height="13"><use href="#ck"/></svg><span class="t tr" style="left:301px;top:886px;">6</span><span class="t tr" style="left:335px;top:886px;">D6</span><span class="t tr" style="left:417px;top:886px;font-size:12px;letter-spacing:0.13px;">0.4000</span><span class="t tr" style="left:469px;top:886px;font-size:12px;letter-spacing:0.13px;">0.0000</span><span class="t tr" style="left:514px;top:886px;width:5px;overflow:hidden">0</span>
<i class="a" style="left:99px;top:914px;width:8px;height:0px;border-top:1px dotted #9a9a9a"></i><svg class="a" style="left:108.5px;top:907.5px;" width="15" height="13"><use href="#ck"/></svg><svg class="a" style="left:124px;top:906px;" width="16" height="16"><use href="#opp"/></svg><span class="t tr" style="left:143px;top:906px;font-size:12px;letter-spacing:-0.48px;">PLANAR_PROFILE_...</span><svg class="a" style="left:270px;top:908px;" width="15" height="13"><use href="#ck"/></svg><span class="t tr" style="left:301px;top:906px;">6</span><span class="t tr" style="left:335px;top:906px;">D6</span><span class="t tr" style="left:417.5px;top:906px;font-size:12px;letter-spacing:0.26px;">-0.0150</span><span class="t tr" style="left:469px;top:906px;font-size:12px;letter-spacing:0.13px;">0.0000</span><span class="t tr" style="left:514px;top:906px;width:5px;overflow:hidden">0</span>
<i class="a" style="left:99px;top:934px;width:8px;height:0px;border-top:1px dotted #9a9a9a"></i><svg class="a" style="left:109px;top:926.5px;" width="15" height="15"><use href="#no"/></svg><svg class="a" style="left:124px;top:926px;" width="16" height="16"><use href="#opp"/></svg><span class="t tr pu" style="left:143px;top:926px;font-size:12px;letter-spacing:-0.48px;">PLANAR_PROFILE_...</span><svg class="a" style="left:270px;top:928px;" width="15" height="13"><use href="#ck"/></svg><span class="t tr pu" style="left:301px;top:926px;">1</span><span class="t tr pu" style="left:335px;top:926px;"><span class="cj">倒角刀</span>D6</span><span class="t tr pu" style="left:417.5px;top:926px;font-size:12px;letter-spacing:0.26px;">-0.5000</span><span class="t tr pu" style="left:469px;top:926px;font-size:12px;letter-spacing:0.13px;">0.0000</span><span class="t tr pu" style="left:514px;top:926px;width:5px;overflow:hidden">0</span>
<i class="a" style="left:264.8px;top:263px;width:1.3px;height:968px;background:#111"></i>
<i class="a" style="left:797px;top:174px;width:435px;height:25px;background:#fff"></i><i class="a" style="left:797px;top:174px;width:310px;height:26px;background:#06678f"></i><i class="a" style="left:797px;top:198px;width:435px;height:3px;background:#06678f"></i><svg class="a" style="left:803px;top:179px" width="15" height="15" viewBox="0 0 15 15"><path d="M5 1 H1.500 V4.500 H5 M5 7.500 H1.500 V11.500 H5" fill="none" stroke="#fff" stroke-width="1.200"/><path d="M7 8.500 A3.500 3.500 0 0 1 13.500 7 M14 10.500 A3.500 3.500 0 0 1 7.500 12" fill="none" stroke="#fff" stroke-width="1.300"/><path d="M14.500 4.500 V7.500 H11.500 M6.500 14.500 V11.500 H9.500" fill="none" stroke="#fff" stroke-width="1.100"/></svg><span class="t " style="left:823px;top:180px;font-size:12px;letter-spacing:0.35px;color:#fff">Z089-04-06</span><span class="t " style="left:893.2px;top:180px;color:#fff;font-size:12.600px;letter-spacing:-.600px;text-spacing-trim:space-all;font-feature-settings:"halt" 0,"palt" 0,"chws" 0">取料电机安装板（一）（二）</span><span class="t " style="left:1050px;top:180px;font-size:12px;letter-spacing:0.54px;color:#fff">.prt</span><svg class="a" style="left:1075px;top:181px" width="12" height="12" viewBox="0 0 12 12"><path d="M7 1.500 H1.500 V10.500 H9.500 V7" fill="none" stroke="#fff" stroke-width="1.600"/><path d="M5 6.500 L10.500 1.500 M7.500 1 H11 V4.500" fill="none" stroke="#fff" stroke-width="1.400"/></svg><svg class="a" style="left:1091px;top:182px" width="10" height="10" viewBox="0 0 10 10"><path d="M1 1 L9 9 M9 1 L1 9" stroke="#c9dbe4" stroke-width="2.200"/></svg>
<i class="a" style="left:797px;top:201px;width:435px;height:1030px;background:linear-gradient(#b6b7b9 0%,#bcbdbf 25%,#cfd0d2 55%,#dedfe1 75%,#e6e7e9 100%)"></i><svg class="a" style="left:797px;top:200px" width="435" height="1031" viewBox="797 200 435 1031"><defs><clipPath id="face"><path d="M1040 424 H1232 V772.400 H1116 Q1100 770 1097 759 L1038.600 430 Q1037.500 424.500 1040 424 Z"/></clipPath><linearGradient id="gol" x1="0" x2="1"><stop offset="0" stop-color="#b3a666"/><stop offset=".5" stop-color="#c9bb7a"/><stop offset="1" stop-color="#b3a666"/></linearGradient><linearGradient id="gpu" x1="0" x2="1"><stop offset="0" stop-color="#bd88c8"/><stop offset=".5" stop-color="#b276bd"/><stop offset="1" stop-color="#bb84c5"/></linearGradient><linearGradient id="gte" x1="0" x2="1"><stop offset="0" stop-color="#66b4ba"/><stop offset=".5" stop-color="#86cccf"/><stop offset="1" stop-color="#66b4ba"/></linearGradient><filter id="soft" x="-5%" y="-5%" width="110%" height="110%"><feGaussianBlur stdDeviation="1.1"/></filter></defs><path d="M1035.400 424 L1024 481 L1087.200 831.800 L1105 831.800 L1116 772.400 Q1100 770 1097 759 L1038.600 428 Z" fill="#b3b5b6"/><path d="M1054.500 520 L1049.900 540 L1060.300 609.700 L1058.800 615.400 L1072.600 687 L1066.300 717.200 L1087.200 831.800 L1105 831.800 L1116 772.400 Q1100 770 1097 759 Z" fill="#8b8f91"/><path d="M1035.400 424 L1024 481 L1087.200 831.800" fill="none" stroke="#555" stroke-width=".700"/><path d="M1035.400 424 L1024.500 481 L1029.500 500 L1037.500 432 Z" fill="#74797b"/><path d="M1116 772.400 H1232 V831.800 H1087.200 Z" fill="#aeb0b1"/><path d="M1116 772.400 H1138 L1135 800 L1137 831.800 H1100 Z" fill="#8a8f91"/><path d="M1210 772.400 H1232 V831.800 H1200.400 L1208.800 786 Z" fill="#8b8f91"/><path d="M1202.300 820 H1232 V831.800 H1200.400 Z" fill="#a9b3b7"/><path d="M1212 760.500 H1232 V772.400 H1210 Z" fill="#b9bcbd"/><path d="M1097 761 Q1101 770 1115.900 772.400 L1105.400 831.800 L1087.200 830.400 Z" fill="#333a90"/><path d="M1097 761 Q1101 770 1115.900 772.400 L1114.500 778 Q1102 776 1096 768 Z" fill="#5a62c0" opacity=".7"/><path d="M1099.500 768 L1091.500 830.800" stroke="#1d2260" stroke-width=".800"/><path d="M1087.200 831.800 H1232" stroke="#444" stroke-width=".800"/><path d="M1040 424 H1232 V772.400 H1116 Q1100 770 1097 759 L1038.600 430 Q1037.500 424.500 1040 424 Z" fill="#fdfefe"/><g clip-path="url(#face)"><g filter="url(#soft)"><polygon points="1049.7,450.3 1067.7,431.4 1143.2,427.3 1143.2,452.7 1119.4,465.9 1128.5,544.6 1084.2,530.7 1071.0,528.2 1062.8,497.0" fill="#d8e0e4"/><polygon points="1119.9,468.3 1143.2,452.7 1144.9,451.1 1148.1,480.6 1156.4,513.5 1161.3,536.4 1144.9,529.9 1130.1,520.0 1123.5,506.9" fill="#d8e0e4"/><polygon points="1144.9,427.3 1161.3,442.1 1208.9,444.2 1200.7,424.8 1236.8,424.8 1236.8,520.0 1210.5,529.9 1177.7,538.1 1169.5,513.5 1154.7,480.6 1145.7,450.3" fill="#d8e0e4"/><polygon points="1044.8,451.9 1087.4,480.6 1079.2,484.7" fill="#fdfefe"/><polygon points="1044.8,453.6 1073.5,492.1 1068.6,494.6" fill="#fdfefe"/><polygon points="1071.0,528.2 1100.6,470.8 1106.3,472.4 1084.2,530.7" fill="#fdfefe"/><polygon points="1085.0,530.7 1117.0,464.2 1119.9,469.2 1094.0,533.1" fill="#fdfefe"/><polygon points="1118.6,506.9 1128.5,544.6 1123.5,521.7" fill="#fdfefe"/><polygon points="1185.9,569.3 1236,562.7 1236,593.9 1187.5,592.2" fill="#e9eef0"/><polygon points="1078.2,638.0 1145.1,646.5 1156.4,653.1 1160.2,687.0 1169.6,683.2 1188.5,709.6 1199.8,739.8 1175.3,747.3 1172.4,776 1101.8,776 1097.1,758.6" fill="#dae2e5"/><polygon points="1090.5,704.0 1105.5,700.2 1122.5,715.3 1105.5,730.4 1094.2,734.1" fill="#f6f8f9"/><polygon points="1205.4,653.1 1236,651.2 1236,675.7 1207.3,677.6" fill="#dae2e5"/><polygon points="1188.5,600.3 1199.8,602.2 1197.9,634.2 1190.4,630.5" fill="#e6ecee"/><polygon points="1107,609.500 1136,609 1136,611.500 Z" fill="#dfe6e9"/><polygon points="1106,631.500 1142,627 1142,632 Z" fill="#dfe6e9"/><polygon points="1170,755 1236,750 1236,776 1170,776" fill="#dae2e5"/></g><ellipse cx="1246" cy="710" rx="53" ry="39" fill="#a88282" stroke="#3a3030" stroke-width=".800"/><path d="M1206 735 Q1225 728 1240 729 V760 Q1218 752 1206 735 Z" fill="#c5d2d7" stroke="#3a3030" stroke-width=".600"/><ellipse cx="1175.800" cy="663.400" rx="18.300" ry="12.800" fill="#c07a7a" stroke="#333" stroke-width=".800"/><path d="M1160.500 668 Q1175 656 1191.500 668.500 Q1186 676.500 1175.800 676.200 Q1166 676 1160.500 668 Z" fill="#f3f5f6"/><path d="M1166 673 Q1175 667 1184 674 Q1176 677 1166 673 Z" fill="#4cbf5e"/><ellipse cx="1193.400" cy="760.500" rx="18" ry="13.300" fill="#c07a7a" stroke="#333" stroke-width=".800"/><path d="M1176.500 768 Q1192 754 1210 768 V775 H1176.500 Z" fill="#eef1f2"/></g><path d="M1176 772.400 L1175.300 786 H1208.800 L1210 772.400 Z" fill="#c5c8c9" stroke="#333" stroke-width=".700"/><ellipse cx="1190.600" cy="774.800" rx="9.500" ry="7" fill="#3cb04a" stroke="#2a8a38" stroke-width=".600"/><path d="M1208.800 786 L1200.400 831.800" stroke="#444" stroke-width=".700"/><path d="M1232 772.400 H1116 Q1100 770 1097 759 L1038.600 430" fill="none" stroke="#444" stroke-width=".800"/><path d="M1143 423.500 H1232" stroke="#333" stroke-width=".900"/><ellipse cx="1099.500" cy="497.700" rx="23.500" ry="16.600" fill="url(#gol)" stroke="#3a3a2a" stroke-width=".800" transform="rotate(7 1099.500 497.700)"/><path d="M1086 510.500 Q1097 503 1112 510 Q1104 514.600 1097 514.200 Q1090 513.600 1086 510.500 Z" fill="#8a8d8c"/><ellipse cx="1155.500" cy="621.600" rx="19.200" ry="13.600" fill="url(#gpu)" stroke="#3a2a3a" stroke-width=".800" transform="rotate(6 1155.500 621.600)"/><ellipse cx="1219" cy="622" rx="18.500" ry="12.300" fill="url(#gte)" stroke="#2a3a3a" stroke-width=".800" transform="rotate(6 1219 622)"/><path d="M841 596.300 L1232 597.800" stroke="#00f6fb" stroke-width="2.600"/><path d="M1035.400 423.500 L1086.700 421.800 L1062 419.800 Z" fill="#f04040"/><path d="M1060 422.600 H1120" stroke="#f04040" stroke-width="1"/><path d="M1116.500 419.500 L1136.600 422.700 L1117 425.400 Z" fill="#f04848"/><path d="M1035.400 423.500 L1039.600 392 L1045.500 365 L1048 365 L1043.200 395 Z" fill="#1028c0"/><path d="M1049.400 348.800 L1051 366.500 L1043.500 365 Z" fill="#0a1fb0"/><path d="M1035.400 423.500 L1029 392 L1024.800 365 L1022.500 365.500 L1026 396 Z" fill="#3cb83c"/><path d="M1023 348.800 L1026.800 365 L1020.500 365.800 Z" fill="#2fa82f"/><text x="1025.500" y="347.300" font-family="Liberation Sans,sans-serif" font-size="12.500" fill="#35b835">YM</text><text x="1030" y="347.300" font-family="Liberation Sans,sans-serif" font-size="12.500" fill="#1a40e8">ZM</text><text x="1032" y="381" font-family="Liberation Sans,sans-serif" font-size="12.500" fill="#35a835">YC</text><text x="1023.500" y="381" font-family="Liberation Sans,sans-serif" font-size="12.500" fill="#1a40e8">ZC</text><text x="1074.500" y="437.400" font-family="Liberation Sans,sans-serif" font-size="12.500" fill="#e03c3c">XC</text><text x="1120.300" y="437.400" font-family="Liberation Sans,sans-serif" font-size="12.500" fill="#e03c3c">XM</text><path d="M894.400 1211 L901.500 1222 L899 1221.500 L900.500 1231 L895.500 1231 L894.500 1222.500 L892.300 1223 Z" fill="#2fb02f"/><path d="M913.800 1211.300 L916.300 1226.500 L913.500 1227.500 L913 1231 L908 1231 L908.500 1227.500 L906.800 1224 Z" fill="#0a24b8"/><text x="889.300" y="1208.300" font-family="Liberation Sans,sans-serif" font-size="11" fill="#2f9a3a">Y</text><text x="912" y="1208.500" font-family="Liberation Sans,sans-serif" font-size="11" fill="#2a40f0">Z</text></svg>
<span class="t" style="left:1019.200px;top:1209px;font-family:'Liberation Serif','Noto Serif CJK SC',serif;color:#66676a;font-size:16px;height:20px;line-height:20px;transform:scale(.667,1.08);transform-origin:0 60%">UG</span><span class="t" style="left:1035.500px;top:1209px;font-family:'Liberation Serif','Noto Serif CJK SC',serif;color:#66676a;font-size:16px;height:20px;line-height:20px;letter-spacing:-0.52px;">爱好者论坛</span><span class="t" style="left:1124px;top:1209px;font-family:'Liberation Serif','Noto Serif CJK SC',serif;color:#66676a;font-size:16px;height:20px;line-height:20px;transform:scale(.717,1.08);transform-origin:0 60%">WWW.UGSNX.COM</span>
<i class="a" style="left:518px;top:200px;width:323px;height:986px;background:#f0f0f0;border:1px solid #d5d5d5;box-shadow:0 0 3px rgba(0,0,0,.25)"></i><i class="a" style="left:518px;top:200px;width:323px;height:24.5px;background:#06678f"></i><svg class="a" style="left:525px;top:205.500px" width="15" height="15" viewBox="0 0 16 16"><circle cx="8" cy="8" r="4.6" fill="none" stroke="#fff" stroke-width="3"/><path d="M8 0.500V3 M8 13V15.500 M0.500 8H3 M13 8H15.500 M2.700 2.700L4.500 4.500 M11.500 11.500L13.300 13.300 M2.700 13.300L4.500 11.500 M11.500 4.500L13.300 2.700" stroke="#fff" stroke-width="2.400"/></svg><span class="t " style="left:548px;top:205.5px;color:#fff;font-size:13px;letter-spacing:0.63px;">面铣 - [FACE_MILLING]</span><span class="t " style="left:799px;top:205px;color:#fff;font-size:15px;font-weight:bold">?</span><svg class="a" style="left:820px;top:207px" width="11" height="11" viewBox="0 0 11 11"><path d="M1 1 L10 10 M10 1 L1 10" stroke="#fff" stroke-width="1.800"/></svg>
<span class="t dl" style="left:529px;top:238px;">几何体</span><span class="t dl" style="left:529px;top:278px;">指定部件</span><span class="t dl" style="left:529px;top:312px;">指定面边界</span><span class="t dl" style="left:529px;top:346px;">指定检查体</span><span class="t dl" style="left:529px;top:379.5px;">指定检查边界</span><span class="t dl" style="left:529px;top:408px;">刀具</span><i class="a" style="left:646px;top:233px;width:117px;height:25px;background:#fff;border:1px solid #7a7a7a"></i><span class="t dl" style="left:651px;top:238px;font-size:12px;letter-spacing:-0.07px;">MCS_MILL</span><i class="caret" style="left:747.5px;top:244px;border-left-width:4px;border-right-width:4px;border-top-width:4.500px"></i><i class="a" style="left:646px;top:403px;width:117px;height:25px;background:#fff;border:1px solid #7a7a7a"></i><span class="t dl" style="left:651px;top:408px;font-size:12px;letter-spacing:0.20px;">D80R5 (铣刀-5 参</span><i class="caret" style="left:747.5px;top:414px;border-left-width:4px;border-right-width:4px;border-top-width:4.500px"></i><i class="a" style="left:743.5px;top:405px;width:6px;height:21px;background:#fff"></i><i class="caret" style="left:747.5px;top:414px;border-left-width:4px;border-right-width:4px;border-top-width:4.500px"></i><i class="a" style="left:765px;top:233px;width:32px;height:32px;background:#f1f1f1;border:1px solid #7d7d7d"></i><i class="a" style="left:799px;top:233px;width:32px;height:32px;background:#f1f1f1;border:1px solid #7d7d7d"></i><i class="a" style="left:765px;top:267px;width:32px;height:32px;background:#f1f1f1;border:1px solid #7d7d7d"></i><i class="a" style="left:799px;top:267px;width:32px;height:32px;background:#f1f1f1;border:1px solid #7d7d7d"></i><i class="a" style="left:765px;top:301px;width:32px;height:32px;background:#f1f1f1;border:1px solid #7d7d7d"></i><i class="a" style="left:799px;top:301px;width:32px;height:32px;background:#f1f1f1;border:1px solid #7d7d7d"></i><i class="a" style="left:765px;top:335px;width:32px;height:32px;background:#f1f1f1;border:1px solid #7d7d7d"></i><i class="a" style="left:799px;top:335px;width:32px;height:32px;background:#f1f1f1;border:1px solid #cfcfcf"></i><i class="a" style="left:765px;top:369px;width:32px;height:32px;background:#f1f1f1;border:1px solid #7d7d7d"></i><i class="a" style="left:799px;top:369px;width:32px;height:32px;background:#f1f1f1;border:1px solid #cfcfcf"></i><i class="a" style="left:765px;top:403px;width:32px;height:32px;background:#f1f1f1;border:1px solid #7d7d7d"></i><i class="a" style="left:799px;top:403px;width:32px;height:32px;background:#f1f1f1;border:1px solid #7d7d7d"></i><svg class="a" style="left:803px;top:275px;color:#464646" width="24" height="14"><use href="#eye"/></svg><svg class="a" style="left:803px;top:309px;color:#464646" width="24" height="14"><use href="#eye"/></svg><svg class="a" style="left:803px;top:343px;color:#c6c6c6" width="24" height="14"><use href="#eye"/></svg><svg class="a" style="left:803px;top:377px;color:#c6c6c6" width="24" height="14"><use href="#eye"/></svg><!--DLGICONS-->
<i class="a" style="left:529px;top:437px;width:302px;height:141px;background:#fff;border:1px solid #dedede;border-radius:1px"></i><i class="caret" style="left:538px;top:448.7px;border-top-color:#0b5f86"></i><span class="t sec" style="left:552px;top:442.2px;font-size:12.6px;letter-spacing:0.46px;">输出</span><span class="t dl" style="left:537.5px;top:471px;">刀具号</span><div class="a" style="left:687px;top:467px;width:82px;height:23px;background:#fff;border:1px solid #7a7a7a"><div class="a" style="left:0;top:0;width:76.5px;height:21px;overflow:hidden"><span class="a num" style="right:1.5px;top:0;line-height:21px;color:#222">24</span></div></div><i class="a" style="left:771px;top:467px;width:24px;height:23px;background:#f1f1f1;border:1px solid #7d7d7d"></i><svg class="a" style="left:777px;top:470.5px;" width="12" height="15"><use href="#lk"/></svg><i class="a" style="left:798px;top:470px;width:13px;height:13px;background:#fff;border:1.500px solid #333"></i><svg class="a" style="left:799px;top:471px" width="11" height="11" viewBox="0 0 11 11"><path d="M1.500 5 L4.300 8.300 L9.800 1.500" fill="none" stroke="#333" stroke-width="1.300"/></svg><span class="t dl" style="left:537.5px;top:497px;">补偿寄存器</span><div class="a" style="left:687px;top:493px;width:82px;height:23px;background:#fff;border:1px solid #7a7a7a"><div class="a" style="left:0;top:0;width:76.5px;height:21px;overflow:hidden"><span class="a num" style="right:1.5px;top:0;line-height:21px;color:#222">24</span></div></div><i class="a" style="left:771px;top:493px;width:24px;height:23px;background:#f1f1f1;border:1px solid #7d7d7d"></i><svg class="a" style="left:777px;top:496.5px;" width="12" height="15"><use href="#lk"/></svg><i class="a" style="left:798px;top:496px;width:13px;height:13px;background:#fff;border:1.500px solid #333"></i><svg class="a" style="left:799px;top:497px" width="11" height="11" viewBox="0 0 11 11"><path d="M1.500 5 L4.300 8.300 L9.800 1.500" fill="none" stroke="#333" stroke-width="1.300"/></svg><span class="t dl" style="left:537.5px;top:523px;">刀具补偿寄存器</span><div class="a" style="left:687px;top:519px;width:82px;height:23px;background:#fff;border:1px solid #7a7a7a"><div class="a" style="left:0;top:0;width:76.5px;height:21px;overflow:hidden"><span class="a num" style="right:1.5px;top:0;line-height:21px;color:#222">24</span></div></div><i class="a" style="left:771px;top:519px;width:24px;height:23px;background:#f1f1f1;border:1px solid #7d7d7d"></i><svg class="a" style="left:777px;top:522.5px;" width="12" height="15"><use href="#lk"/></svg><i class="a" style="left:798px;top:522px;width:13px;height:13px;background:#fff;border:1.500px solid #333"></i><svg class="a" style="left:799px;top:523px" width="11" height="11" viewBox="0 0 11 11"><path d="M1.500 5 L4.300 8.300 L9.800 1.500" fill="none" stroke="#333" stroke-width="1.300"/></svg><span class="t dl" style="left:537.5px;top:549px;">Z 偏置</span><div class="a" style="left:687px;top:545px;width:82px;height:23px;background:#fff;border:1px solid #7a7a7a"><div class="a" style="left:0;top:0;width:76.5px;height:21px;overflow:hidden"><span class="a num" style="left:21.5px;top:0;line-height:21px;color:#222">0<span style="display:inline-block;width:8.5px;text-align:center">.</span>00000</span></div></div><i class="a" style="left:771px;top:545px;width:24px;height:23px;background:#f1f1f1;border:1px solid #7d7d7d"></i><svg class="a" style="left:777px;top:548.5px;" width="12" height="15"><use href="#lkc"/></svg><i class="a" style="left:798px;top:548px;width:13px;height:13px;background:#fff;border:1.500px solid #333"></i>
<i class="a" style="left:529px;top:581px;width:302px;height:24px;background:#fff;border:1px solid #dedede;border-radius:1px"></i><i class="a" style="left:540px;top:590.7px;width:0;height:0;border-top:3.5px solid transparent;border-bottom:3.5px solid transparent;border-left:4px solid #0b5f86"></i><span class="t sec" style="left:552px;top:586.2px;font-size:12.6px;letter-spacing:0.33px;">换刀设置</span><i class="a" style="left:529px;top:608px;width:302px;height:24px;background:#fff;border:1px solid #dedede;border-radius:1px"></i><i class="a" style="left:540px;top:617.7px;width:0;height:0;border-top:3.5px solid transparent;border-bottom:3.5px solid transparent;border-left:4px solid #0b5f86"></i><span class="t sec" style="left:552px;top:613.2px;font-size:12.6px;letter-spacing:0.46px;">刀轴</span><span class="t dl" style="left:529px;top:639px;">部件余量</span><div class="a" style="left:723px;top:635px;width:82px;height:23px;background:#fff;border:1px solid #7a7a7a"><i class="a" style="left:3.5px;top:2px;width:73px;height:17px;background:#0a78d7"></i><div class="a" style="left:0;top:0;width:76.5px;height:21px;overflow:hidden"><span class="a num" style="left:21px;top:0;line-height:21px;color:#fff">0<span style="display:inline-block;width:8.5px;text-align:center">.</span>00000</span></div></div><i class="a" style="left:807px;top:635px;width:24px;height:23px;background:#f1f1f1;border:1px solid #7d7d7d"></i><svg class="a" style="left:813px;top:639px;" width="12" height="15"><use href="#lk"/></svg><span class="t dl" style="left:529px;top:665px;">壁余量</span><div class="a" style="left:749px;top:662px;width:82px;height:23px;background:#fff;border:1px solid #7a7a7a"><div class="a" style="left:0;top:0;width:76.5px;height:21px;overflow:hidden"><span class="a num" style="left:21px;top:0;line-height:21px;color:#222">0<span style="display:inline-block;width:8.5px;text-align:center">.</span>00000</span></div></div><span class="t dl" style="left:529px;top:691px;">切削模式</span><i class="a" style="left:693px;top:687px;width:138px;height:25px;background:#fff;border:1px solid #7a7a7a"></i><span class="t dl" style="left:718px;top:692px;">单向</span><i class="caret" style="left:815.5px;top:698px;border-left-width:4px;border-right-width:4px;border-top-width:4.500px"></i><svg class="a" style="left:697px;top:692px" width="15" height="14" viewBox="0 0 15 14"><path d="M0 2.500 H13 M0 7 H13 M0 11.500 H13" stroke="#1aa6d6" stroke-width="1.200" fill="none"/><path d="M10.500 0.500 L13.500 2.500 L10.500 4.500 M10.500 5 L13.500 7 L10.500 9 M10.500 9.500 L13.500 11.500 L10.500 13.500" stroke="#1aa6d6" stroke-width="1.100" fill="none"/></svg><span class="t dl" style="left:529px;top:718.5px;">步距</span><i class="a" style="left:693px;top:714px;width:138px;height:25px;background:#fff;border:1px solid #7a7a7a"></i><span class="t dl" style="left:698px;top:719px;font-size:12px;letter-spacing:0.08px;">% 刀具平直</span><i class="caret" style="left:815.5px;top:725px;border-left-width:4px;border-right-width:4px;border-top-width:4.500px"></i><span class="t dl" style="left:529px;top:744.5px;">平面直径百分比</span><div class="a" style="left:749px;top:741px;width:82px;height:23px;background:#fff;border:1px solid #7a7a7a"><div class="a" style="left:0;top:0;width:76.5px;height:21px;overflow:hidden"><span class="a num" style="left:3.5px;top:0;line-height:21px;color:#222">100<span style="display:inline-block;width:8.5px;text-align:center">.</span>00000</span></div></div><span class="t dl" style="left:529px;top:769.5px;">毛坯距离</span><div class="a" style="left:749px;top:766px;width:82px;height:23px;background:#fff;border:1px solid #7a7a7a"><div class="a" style="left:0;top:0;width:76.5px;height:21px;overflow:hidden"><span class="a num" style="left:21px;top:0;line-height:21px;color:#222">3<span style="display:inline-block;width:8.5px;text-align:center">.</span>00000</span></div></div><span class="t dl" style="left:529px;top:794.5px;">每刀切削深度</span><div class="a" style="left:749px;top:791px;width:82px;height:23px;background:#fff;border:1px solid #7a7a7a"><div class="a" style="left:0;top:0;width:76.5px;height:21px;overflow:hidden"><span class="a num" style="left:21px;top:0;line-height:21px;color:#222">0<span style="display:inline-block;width:8.5px;text-align:center">.</span>00000</span></div></div><span class="t dl" style="left:529px;top:819.5px;">最终底面余量</span><div class="a" style="left:749px;top:816px;width:82px;height:23px;background:#fff;border:1px solid #7a7a7a"><div class="a" style="left:0;top:0;width:76.5px;height:21px;overflow:hidden"><span class="a num" style="left:21px;top:0;line-height:21px;color:#222">0<span style="display:inline-block;width:8.5px;text-align:center">.</span>00000</span></div></div>
<span class="t dl" style="left:529px;top:848.5px;">切削参数</span><i class="a" style="left:799px;top:841px;width:32px;height:32px;background:#f1f1f1;border:1px solid #7d7d7d"></i><span class="t dl" style="left:529px;top:883px;">非切削移动</span><i class="a" style="left:799px;top:875px;width:32px;height:32px;background:#f1f1f1;border:1px solid #7d7d7d"></i><span class="t dl" style="left:529px;top:917px;">进给率和速度</span><i class="a" style="left:799px;top:909px;width:32px;height:32px;background:#f1f1f1;border:1px solid #7d7d7d"></i><!--DLGICONS2-->
<i class="a" style="left:529px;top:942px;width:302px;height:24px;background:#fff;border:1px solid #dedede;border-radius:1px"></i><i class="a" style="left:540px;top:951.7px;width:0;height:0;border-top:3.5px solid transparent;border-bottom:3.5px solid transparent;border-left:4px solid #0b5f86"></i><span class="t sec" style="left:552px;top:947.2px;font-size:12.6px;letter-spacing:0.33px;">机床控制</span><i class="a" style="left:529px;top:969px;width:302px;height:24px;background:#fff;border:1px solid #dedede;border-radius:1px"></i><i class="a" style="left:540px;top:978.7px;width:0;height:0;border-top:3.5px solid transparent;border-bottom:3.5px solid transparent;border-left:4px solid #0b5f86"></i><span class="t sec" style="left:552px;top:974.2px;font-size:12.6px;letter-spacing:0.46px;">程序</span><i class="a" style="left:529px;top:996px;width:302px;height:24px;background:#fff;border:1px solid #dedede;border-radius:1px"></i><i class="a" style="left:540px;top:1005.7px;width:0;height:0;border-top:3.5px solid transparent;border-bottom:3.5px solid transparent;border-left:4px solid #0b5f86"></i><span class="t sec" style="left:552px;top:1001.2px;font-size:12.6px;letter-spacing:0.46px;">描述</span><i class="a" style="left:529px;top:1023px;width:302px;height:24px;background:#fff;border:1px solid #dedede;border-radius:1px"></i><i class="a" style="left:540px;top:1032.7px;width:0;height:0;border-top:3.5px solid transparent;border-bottom:3.5px solid transparent;border-left:4px solid #0b5f86"></i><span class="t sec" style="left:552px;top:1028.2px;font-size:12.6px;letter-spacing:0.46px;">选项</span><i class="a" style="left:529px;top:1050px;width:302px;height:71px;background:#fff;border:1px solid #dedede;border-radius:1px"></i><i class="caret" style="left:538px;top:1061.7px;border-top-color:#0b5f86"></i><span class="t sec" style="left:552px;top:1055.2px;font-size:12.6px;letter-spacing:0.46px;">操作</span><i class="a" style="left:613px;top:1081px;width:32px;height:32px;background:#f1f1f1;border:1px solid #7d7d7d"></i><i class="a" style="left:647px;top:1081px;width:32px;height:32px;background:#f1f1f1;border:1px solid #7d7d7d"></i><i class="a" style="left:681px;top:1081px;width:32px;height:32px;background:#f1f1f1;border:1px solid #7d7d7d"></i><i class="a" style="left:715px;top:1081px;width:32px;height:32px;background:#f1f1f1;border:1px solid #7d7d7d"></i><!--DLGICONS3-->
<i class="a" style="left:675px;top:1131px;width:0;height:0;border-left:4.500px solid transparent;border-right:4.500px solid transparent;border-bottom:5px solid #111"></i><i class="a" style="left:524px;top:1140px;width:311px;height:1px;background:#dcdcdc"></i><i class="a" style="left:712px;top:1149px;width:54px;height:25px;background:#06678f"></i><span class="t dl" style="left:727px;top:1154px;color:#fff">确定</span><i class="a" style="left:771px;top:1149px;width:54px;height:25px;background:#f7f7f7;border:1px solid #06678f"></i><span class="t dl" style="left:786px;top:1154px;color:#0b5f86">取消</span>
<svg class="a" style="left:768px;top:236px" width="26" height="26" viewBox="0 0 26 26"><path d="M12 2 L18 1 L23 12 L16 16 Z" fill="#9a9a9a" stroke="#555" stroke-width=".800"/><ellipse cx="5.500" cy="10" rx="4.500" ry="6" fill="#f08a24"/><rect x="5.500" y="4" width="7" height="12" fill="#f39a3a"/><ellipse cx="12.500" cy="10" rx="3" ry="6" fill="#e07818"/><circle cx="19.5" cy="19.5" r="5.5" fill="#fff" stroke="#222" stroke-width="1.1"/><path d="M16.2 19.5 H22.8 M19.5 16.2 V22.8" stroke="#222" stroke-width="1.1"/></svg><svg class="a" style="left:802px;top:236px" width="26" height="26" viewBox="0 0 26 26"><path d="M12.5 10.5 l-9.500 9.500 a2.600 2.600 0 1 0 3.700 3.700 l9.500 -9.500 a5.200 5.200 0 0 0 6.300 -6.800 l-3.300 3.300 l-3.200 -.900 l-.900 -3.200 l3.300 -3.300 a5.200 5.200 0 0 0 -5.900 7.200 Z" fill="#f6f6f6" stroke="#3a3a3a" stroke-width="1.200"/><circle cx="6.300" cy="20.300" r=".900" fill="#444"/></svg><svg class="a" style="left:768px;top:270px" width="26" height="26" viewBox="0 0 26 26"><path d="M2.500 9.500 L9.500 5.500 L13.500 7.500 V12.500 L15.500 11.500 L19.500 9.500 L23.500 11.500 V19 L14.500 23.500 L2.500 17.500 Z" fill="#dcdcdc" stroke="#444" stroke-width="1.100"/><path d="M14.500 15 L23.500 11.500 V19 L14.500 23.500 Z" fill="#9c9c9c"/><path d="M9.500 9 L13.500 7.500 V12.500 L15.500 13.500 L14.500 15 L9.500 12.500 Z" fill="#8e8e8e"/><path d="M2.500 9.500 L9.500 13 V12.500 M14.500 15 V23.500 M14.500 15 L23.500 11.500 M9.500 13 L14.500 15" fill="none" stroke="#444" stroke-width=".900"/></svg><svg class="a" style="left:768px;top:304px" width="26" height="26" viewBox="0 0 26 26"><path d="M2 9 L13 3 L24 9 L13 15 Z" fill="#fff" stroke="#e84a3a" stroke-width="1.200"/><path d="M2 9 V18 L13 24 L24 18 V9 M13 15 V24" fill="none" stroke="#333" stroke-width="1" stroke-dasharray="1.500 1.500"/><path d="M6 5 L20 13 M20 5 L6 13" stroke="#e84a3a" stroke-width=".900"/></svg><svg class="a" style="left:768px;top:338px" width="26" height="26" viewBox="0 0 26 26"><path d="M2 11 Q2 6 8 5 L18 7 Q24 9 24 14 V17 Q18 21 11 19 L3 15 Z" fill="#f08a24" stroke="#c86410" stroke-width=".800"/><path d="M3 15 Q10 12 18 14 Q22 15 24 14" fill="none" stroke="#ffc080" stroke-width="1"/></svg><svg class="a" style="left:768px;top:372px" width="26" height="26" viewBox="0 0 26 26"><path d="M3 12 L12 6 L23 11 L21 18 L11 21 Z" fill="#b9c4f0" stroke="#d82020" stroke-width="1.200"/><ellipse cx="13" cy="12.500" rx="5" ry="2.300" fill="#fff" stroke="#2a3ad8" stroke-width="1.100" transform="rotate(12 13 12.500)"/><path d="M11 21 L11 24 L21 21 V18" fill="#8a9ae0" stroke="#2a3ad8" stroke-width=".800"/><path d="M10 3 L12 6 M5 8 L3 12" stroke="#d82020" stroke-width="1"/></svg><svg class="a" style="left:768px;top:406px" width="26" height="26" viewBox="0 0 26 26"><rect x="13" y="1" width="7" height="12" fill="#8a8a8a" stroke="#555" stroke-width=".800"/><rect x="2" y="6" width="8" height="18" rx="2" fill="#f08a24"/><path d="M2 12 L10 9 M2 17 L10 14 M2 22 L10 19" stroke="#b85a10" stroke-width="1.300"/><circle cx="19.5" cy="19.5" r="5.5" fill="#fff" stroke="#222" stroke-width="1.1"/><path d="M16.2 19.5 H22.8 M19.5 16.2 V22.8" stroke="#222" stroke-width="1.1"/></svg><svg class="a" style="left:802px;top:406px" width="26" height="26" viewBox="0 0 26 26"><path d="M2 9 C6 2 19 2 23 9 C21 13 17 15 12.500 15 C8 15 4 13 2 9 Z" fill="#fff" stroke="#3a3a3a" stroke-width="1.200"/><circle cx="11" cy="8" r="3.800" fill="#444"/><path transform="translate(3 1.500) scale(.8)" d="M13.5 14 l-9.500 9.500 a2.600 2.600 0 1 0 3.700 3.700 l9.500 -9.500 a5.200 5.200 0 0 0 6.300 -6.800 l-3.300 3.300 l-3.200 -.900 l-.900 -3.200 l3.300 -3.300 a5.200 5.200 0 0 0 -5.900 7.200 Z" fill="#f6f6f6" stroke="#3a3a3a" stroke-width="1.200"/></svg>
<svg class="a" style="left:802px;top:844px" width="26" height="26" viewBox="0 0 26 26"><rect x="2" y="9" width="18" height="9" fill="#fff" stroke="#333" stroke-width="1"/><path d="M2 15 L8 9 M2 18 L11 9 M6 18 L15 9 M10 18 L19 9 M14 18 L20 12 M18 18 L20 16" stroke="#444" stroke-width=".800"/><path d="M3 4 H18 M15 1.500 L18.500 4 L15 6.500" fill="none" stroke="#1aa6d6" stroke-width="1.200"/><path d="M9 19.500 C12 14 22 14 25 19.500 C22 25 12 25 9 19.500 Z" fill="#fff" stroke="#333" stroke-width="1.100"/><circle cx="17" cy="19.500" r="3" fill="#444"/></svg><svg class="a" style="left:802px;top:878px" width="26" height="26" viewBox="0 0 26 26"><rect x="2" y="9" width="18" height="9" fill="#fff" stroke="#333" stroke-width="1"/><path d="M2 15 L8 9 M2 18 L11 9 M6 18 L15 9 M10 18 L19 9 M14 18 L20 12 M18 18 L20 16" stroke="#444" stroke-width=".800"/><path d="M3 4 H19 M5 2 L2.500 4 L5 6 M3 2 V8 M19 2 V8" fill="none" stroke="#e8801a" stroke-width="1.100"/><path d="M9 19.500 C12 14 22 14 25 19.500 C22 25 12 25 9 19.500 Z" fill="#fff" stroke="#333" stroke-width="1.100"/><circle cx="17" cy="19.500" r="3" fill="#444"/></svg><svg class="a" style="left:802px;top:912px" width="26" height="26" viewBox="0 0 26 26"><rect x="7" y="1" width="5" height="17" rx="1" fill="#3b4fd0" stroke="#1c2a90" stroke-width=".800"/><path d="M7.500 4 L11.500 2 M7.500 8 L11.500 6 M7.500 12 L11.500 10 M7.500 16 L11.500 14" stroke="#9aa6f0" stroke-width="1"/><ellipse cx="9.500" cy="9" rx="6" ry="2.700" fill="none" stroke="#e01818" stroke-width="1.600"/><path d="M11 19 Q12 23 18 22.500 V20 L24 23 L18 26 V24.500 Q11 25 9 19 Z" fill="#3050e0"/></svg>
<svg class="a" style="left:617px;top:1085px" width="26" height="26" viewBox="0 0 26 26"><path d="M8 .500 H.500 V6 H8 V12 H.500 V18 H8" fill="none" stroke="#333" stroke-width="1.200"/><path d="M11.500 16.500 A6 6 0 0 1 22.500 13.500 M23.500 18 A6 6 0 0 1 12.500 21" fill="none" stroke="#333" stroke-width="1.200"/><path d="M23.500 10 V14 H19.500 M11.500 24.500 V20.500 H15.500" fill="none" stroke="#333" stroke-width="1.200"/></svg><svg class="a" style="left:651px;top:1085px" width="26" height="26" viewBox="0 0 26 26"><path d="M8 .500 H.500 V6 H8 V12 H.500 V18 H8" fill="none" stroke="#333" stroke-width="1.200"/><path d="M22 13 A6 6 0 1 1 17 11.500" fill="none" stroke="#333" stroke-width="1.200"/><path d="M22.800 9 V13.500 H18.500" fill="none" stroke="#333" stroke-width="1.200"/></svg><svg class="a" style="left:684px;top:1084px" width="27" height="27" viewBox="0 0 27 27"><path d="M1 7 L10 2 L21 7 V17 L10 22 L1 17 Z" fill="#e4e4e4" stroke="#444" stroke-width="1"/><path d="M3.500 8 L10 4.500 V13 L3.500 16.500 Z" fill="#8f8f8f"/><path d="M3.500 16.500 L10 13 L19 12 V16 L10 20 Z" fill="#f2f2f2" stroke="#777" stroke-width=".500"/><rect x="9.500" y="0" width="5.500" height="13" fill="#ef7d1a"/><path d="M9.500 4 L15 1.500 M9.500 8 L15 5.500 M9.500 12 L15 9.500" stroke="#f9c08a" stroke-width="1.300"/><circle cx="19.5" cy="19.5" r="6" fill="#fff" stroke="#222" stroke-width="1.1"/><path d="M16.5 19.8 L18.78 22.2 L22.5 16.8" fill="none" stroke="#222" stroke-width="1.1"/></svg><svg class="a" style="left:719px;top:1085px" width="26" height="26" viewBox="0 0 26 26"><path d="M5 4.500 H1 V22 H11 M15 17.500 V24.500 H5 V.500 H12 L18.500 7 V12" fill="none" stroke="#333" stroke-width="1.100"/><path d="M12 .500 V7 H18.500" fill="none" stroke="#333" stroke-width="1"/><path d="M7.500 8 H11 M7.500 11.500 H12 M7.500 15 H11" stroke="#333" stroke-width="1"/><path d="M12 16 H23 M20 12.500 L23.500 16 L20 19.500" fill="none" stroke="#333" stroke-width="1.100"/></svg>
<svg class="a" style="left:0;top:0" width="1232" height="1231" viewBox="0 0 1232 1231"><path d="M766 513 L790.700 524.900 L786.800 530 L987.500 743 L781.600 534.600 L775.100 537.200 Z" fill="#f05252"/><path d="M786.800 530 L987.500 743.500 L781.600 534.600 Z" fill="#f05252" stroke="#f05252" stroke-width="1"/></svg>
</div></body></html>
